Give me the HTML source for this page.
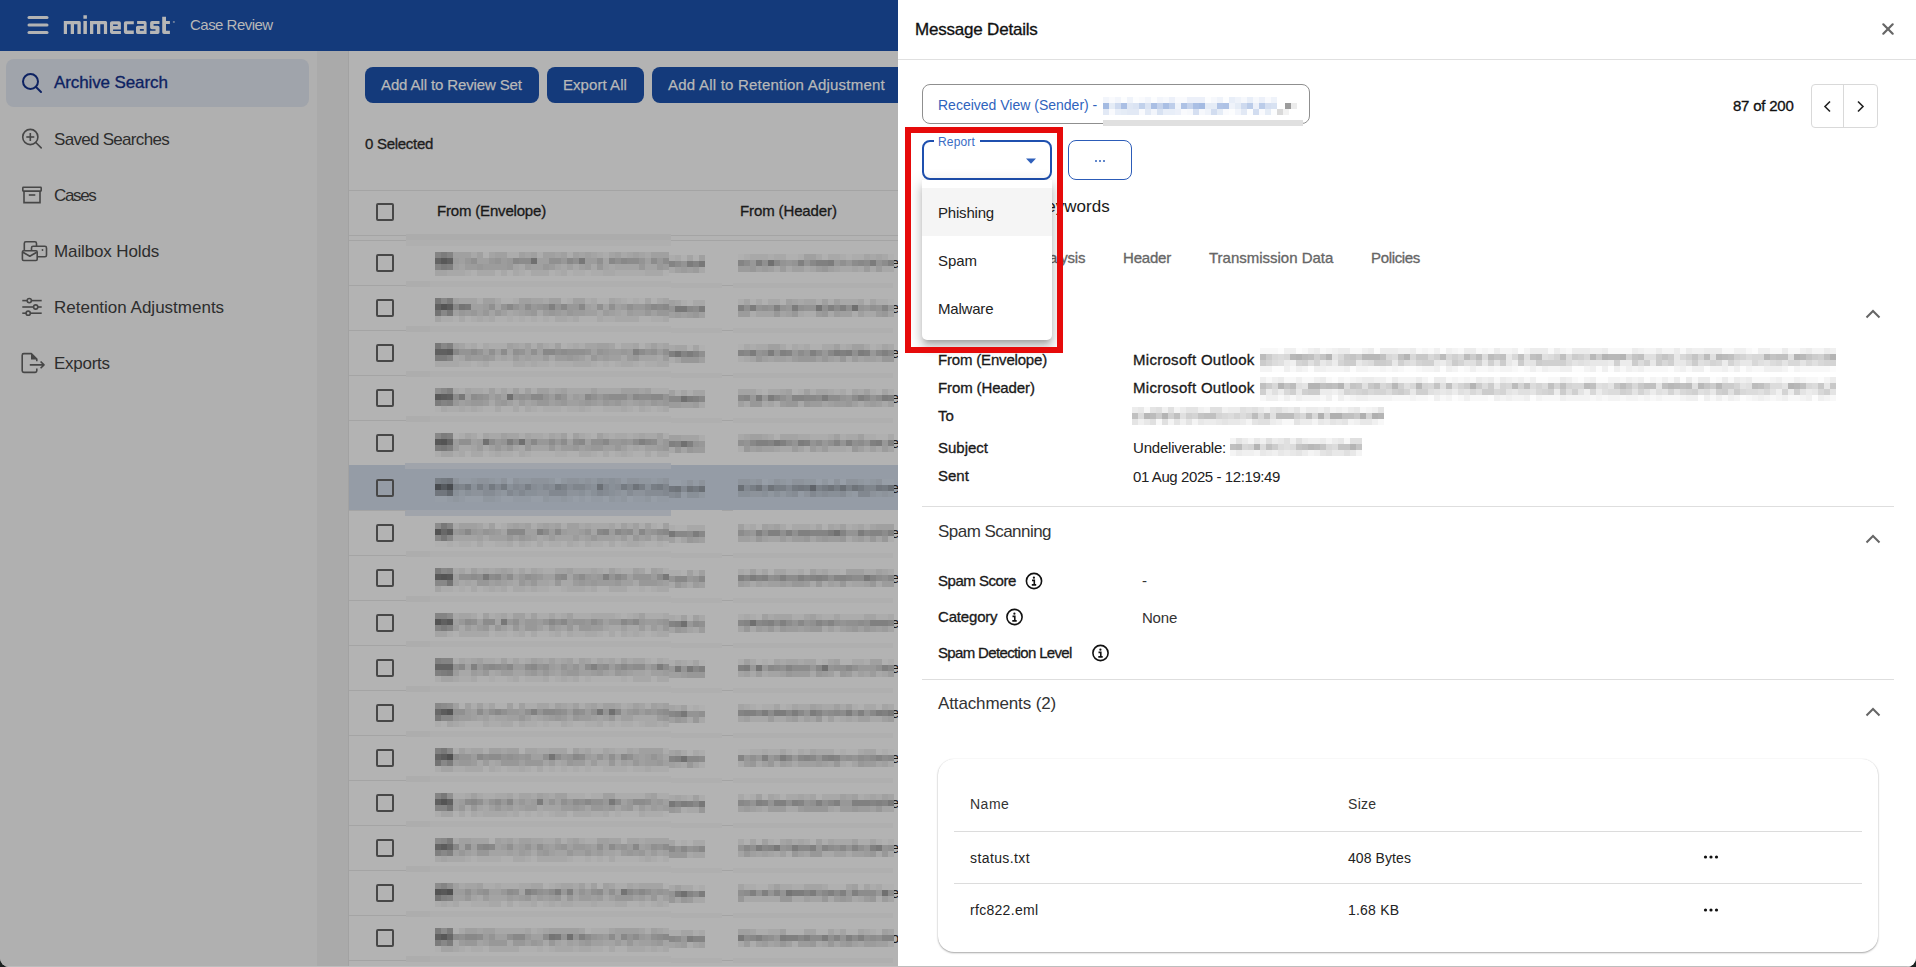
<!DOCTYPE html>
<html><head><meta charset="utf-8">
<style>
*{box-sizing:border-box;margin:0;padding:0}
html,body{width:1916px;height:967px;overflow:hidden;background:#1b2221}
body{position:relative;font-family:"Liberation Sans",sans-serif}
#app{position:absolute;left:0;top:0;width:1916px;height:967px;overflow:hidden;border-radius:0 0 9px 9px;background:#b3b3b3}
.a{position:absolute}
.t{position:absolute;line-height:1;white-space:nowrap}
.b{font-weight:400;-webkit-text-stroke:0.32px currentColor}
svg{position:absolute;overflow:visible}
</style></head>
<body><div id="app">
<!-- ============ LEFT (dimmed) ============ -->
<div class="a" style="left:0;top:0;width:898px;height:51px;background:#143a7b"></div>
<svg style="left:0;top:0" width="60" height="51"><g stroke="#b3b3b3" stroke-width="3" stroke-linecap="round"><line x1="29" y1="17.5" x2="47" y2="17.5"/><line x1="29" y1="25" x2="47" y2="25"/><line x1="29" y1="32.5" x2="47" y2="32.5"/></g></svg>
<svg style="left:0;top:0" width="1" height="1"><path fill="#b6b6b6" fill-rule="evenodd" d="M63.8 21H79.3Q80.8 21 80.8 22.5V34.1H77.4V24.2H74V34.1H70.7V24.2H67V34.1H63.8ZM83.4 21H86.9V34.1H83.4ZM83.4 15.3H86.9V18.8H83.4ZM90 21H105.6Q107.1 21 107.1 22.5V34.1H103.9V24.2H100.3V34.1H97V24.2H93.3V34.1H90ZM111.8 21.2H119.1Q120.9 21.2 120.9 23V29.4H113.1V31.1H120.9V33.9H111.8Q110 33.9 110 32.1V23Q110 21.2 111.8 21.2ZM113.1 24.4H117.7V25.9H113.1ZM125.7 21.2H133.8V24.2H127.1V30.6H133.8V33.9H125.7Q123.9 33.9 123.9 32.1V23Q123.9 21.2 125.7 21.2ZM137.1 21.1H144.8Q146.6 21.1 146.6 22.9V34H137.8Q136 34 136 32.2V27.5Q136 25.7 137.8 25.7H143.8V24.1H137.1ZM139.9 28.9H143.8V30.8H139.9ZM151.9 21.1H159.5V24.1H153.6V25.7H157.7Q159.5 25.7 159.5 27.5V32.2Q159.5 34 157.7 34H150.1V30.8H155.5V29.2H151.9Q150.1 29.2 150.1 27.4V22.9Q150.1 21.1 151.9 21.1ZM162.2 16.7H166V21.1H169.9V24.1H166V30.8H169.9V34H164Q162.2 34 162.2 32.2Z"/><rect x="172.9" y="21.1" width="1.9" height="1.7" fill="#b6b6b6" opacity="0.6"/></svg>

<div class="t" id="caserev" style="left:190px;top:17.3px;font-size:15px;color:#b8b8b8;letter-spacing:-0.52px">Case Review</div>

<div class="a" style="left:0;top:51px;width:317px;height:916px;background:#b0b0b0"></div>
<div class="a" style="left:317px;top:51px;width:31px;height:916px;background:#aaaaaa"></div>
<div class="a" style="left:348px;top:51px;width:1px;height:916px;background:#a2a2a2"></div>

<div class="a" style="left:6px;top:59px;width:303px;height:48px;border-radius:8px;background:#a0a4ab"></div>
<svg style="left:0;top:0" width="50" height="100"><g fill="none" stroke="#0d2262" stroke-width="2"><circle cx="30.5" cy="81.5" r="7.5"/><line x1="36" y1="87" x2="41" y2="92" stroke-linecap="round"/></g></svg>
<div class="t b" style="left:54px;top:73.91px;font-size:17px;color:#0d2262;letter-spacing:-0.11px;">Archive Search</div>
<svg style="left:0;top:0" width="50" height="160"><g fill="none" stroke="#474747" stroke-width="1.6"><circle cx="30.3" cy="137" r="7.6"/><line x1="35.8" y1="142.5" x2="41.2" y2="147.9" stroke-linecap="round"/><line x1="30.3" y1="133" x2="30.3" y2="141"/><line x1="26.3" y1="137" x2="34.3" y2="137"/></g></svg>
<div class="t" style="left:54px;top:130.61px;font-size:17px;color:#2d2d2d;letter-spacing:-0.7px;">Saved Searches</div>
<svg style="left:0;top:0" width="50" height="210"><g fill="none" stroke="#474747" stroke-width="1.6"><rect x="22.8" y="187.3" width="18.4" height="3.8" rx="0.6"/><path d="M24 191.5 V202.6 H40 V191.5"/><line x1="28.8" y1="195" x2="35.3" y2="195"/></g></svg>
<div class="t" style="left:54px;top:186.61px;font-size:17px;color:#2d2d2d;letter-spacing:-1.34px;">Cases</div>
<svg style="left:0;top:0" width="1" height="1"><g fill="none" stroke="#474747" stroke-width="1.6" stroke-linejoin="round"><path d="M24.3 250.8 V243.4 Q24.3 241.8 25.9 241.8 H34.9 Q36.5 241.8 36.5 243.4 V246.3"/><path d="M31.5 250.8 V247.9 Q31.5 246.3 33.1 246.3 H44.9 Q46.5 246.3 46.5 247.9 V255.2 Q46.5 256.8 44.9 256.8 H37.2"/><rect x="22.4" y="250.8" width="14.8" height="9.7" rx="1.2"/><path d="M22.9 252.2 L29.8 256.3 L36.7 252.2"/></g><circle cx="42.5" cy="250" r="0.9" fill="#474747"/></svg>
<div class="t" style="left:54px;top:242.61px;font-size:17px;color:#2d2d2d;letter-spacing:-0.12px;">Mailbox Holds</div>
<svg style="left:0;top:0" width="1" height="1"><g fill="none" stroke="#474747" stroke-width="1.6"><line x1="22.3" y1="300.6" x2="41.7" y2="300.6"/><line x1="22.3" y1="307" x2="41.7" y2="307"/><line x1="22.3" y1="313.2" x2="41.7" y2="313.2"/><circle cx="29.3" cy="300.6" r="2.1" fill="#b0b0b0"/><circle cx="35.7" cy="307" r="2.1" fill="#b0b0b0"/><circle cx="28.2" cy="313.2" r="2.1" fill="#b0b0b0"/></g></svg>
<div class="t" style="left:54px;top:298.61px;font-size:17px;color:#2d2d2d;">Retention Adjustments</div>
<svg style="left:0;top:0" width="1" height="1"><g fill="none" stroke="#474747" stroke-width="1.6" stroke-linejoin="round"><path d="M36.8 361.3 V359.1 L31.3 353.6 H23.8 Q22.2 353.6 22.2 355.2 V370.8 Q22.2 372.4 23.8 372.4 H35.2 Q36.8 372.4 36.8 370.8 V368.5"/><path d="M29.8 364.9 H44 M40.6 361.5 L44 364.9 L40.6 368.3"/></g><path d="M31 353.6 V359.4 H36.8 Z" fill="#474747"/></svg>
<div class="t" style="left:54px;top:354.61px;font-size:17px;color:#2d2d2d;letter-spacing:-0.26px;">Exports</div>


<div class="a" style="left:365px;top:67px;width:174px;height:36px;border-radius:8px;background:#143a7b"></div>
<div class="t b" style="left:381px;top:77.00px;font-size:15px;color:#b8b8b8;letter-spacing:-0.12px;-webkit-text-stroke-width:0.25px;">Add All to Review Set</div>
<div class="a" style="left:547px;top:67px;width:97px;height:36px;border-radius:8px;background:#143a7b"></div>
<div class="t b" style="left:563px;top:77.00px;font-size:15px;color:#b8b8b8;letter-spacing:0.06px;-webkit-text-stroke-width:0.25px;">Export All</div>
<div class="a" style="left:652px;top:67px;width:268px;height:36px;border-radius:8px;background:#143a7b"></div>
<div class="t b" style="left:668px;top:77.00px;font-size:15px;color:#b8b8b8;letter-spacing:0.22px;-webkit-text-stroke-width:0.25px;">Add All to Retention Adjustment</div>
<div class="t b" style="left:365px;top:135.90px;font-size:15px;color:#1e1e1e;letter-spacing:-0.29px;">0 Selected</div>
<div class="a" style="left:349px;top:190px;width:549px;height:1px;background:#a4a4a4"></div>
<div class="a" style="left:349px;top:235px;width:57px;height:1px;background:#a4a4a4"></div>
<div class="a" style="left:349px;top:240px;width:57px;height:1px;background:#a4a4a4"></div>
<div class="a" style="left:406px;top:234px;width:265px;height:6px;background:#acacac"></div>
<div class="a" style="left:406px;top:240px;width:265px;height:6px;background:#afafaf"></div>
<div class="a" style="left:671px;top:235px;width:227px;height:1px;background:#a4a4a4"></div>
<div class="a" style="left:671px;top:240px;width:227px;height:1px;background:#a4a4a4"></div>
<div class="a" style="left:376px;top:203px;width:18px;height:18px;border:2px solid #474747;border-radius:2px"></div>
<div class="t b" style="left:437px;top:202.90px;font-size:15px;color:#1a1a1a;letter-spacing:-0.18px;">From (Envelope)</div>
<div class="t b" style="left:740px;top:202.90px;font-size:15px;color:#1a1a1a;letter-spacing:-0.12px;">From (Header)</div>
<div class="a" style="left:349px;top:285px;width:57px;height:1px;background:#a4a4a4"></div>
<div class="a" style="left:722px;top:285px;width:11px;height:1px;background:#a4a4a4"></div>
<div class="a" style="left:406px;top:281px;width:265px;height:6px;background:#afafaf"></div>
<div class="a" style="left:406px;top:281px;width:24px;height:6px;background:#adadad"></div>
<div class="a" style="left:671px;top:283px;width:51px;height:5px;background:#afafaf"></div>
<div class="a" style="left:733px;top:283px;width:160px;height:5px;background:#afafaf"></div>
<div class="a" style="left:376px;top:254px;width:18px;height:18px;border:2px solid #474747;border-radius:2px"></div>
<div class="t" style="left:891px;top:255.30px;font-size:15px;color:#1a1a1a;">e</div>
<div class="a" style="left:349px;top:330px;width:57px;height:1px;background:#a4a4a4"></div>
<div class="a" style="left:722px;top:330px;width:11px;height:1px;background:#a4a4a4"></div>
<div class="a" style="left:406px;top:326px;width:265px;height:6px;background:#afafaf"></div>
<div class="a" style="left:406px;top:326px;width:24px;height:6px;background:#adadad"></div>
<div class="a" style="left:671px;top:328px;width:51px;height:5px;background:#afafaf"></div>
<div class="a" style="left:733px;top:328px;width:160px;height:5px;background:#afafaf"></div>
<div class="a" style="left:376px;top:299px;width:18px;height:18px;border:2px solid #474747;border-radius:2px"></div>
<div class="t" style="left:891px;top:300.30px;font-size:15px;color:#1a1a1a;">e</div>
<div class="a" style="left:349px;top:375px;width:57px;height:1px;background:#a4a4a4"></div>
<div class="a" style="left:722px;top:375px;width:11px;height:1px;background:#a4a4a4"></div>
<div class="a" style="left:406px;top:371px;width:265px;height:6px;background:#afafaf"></div>
<div class="a" style="left:406px;top:371px;width:24px;height:6px;background:#adadad"></div>
<div class="a" style="left:671px;top:373px;width:51px;height:5px;background:#afafaf"></div>
<div class="a" style="left:733px;top:373px;width:160px;height:5px;background:#afafaf"></div>
<div class="a" style="left:376px;top:344px;width:18px;height:18px;border:2px solid #474747;border-radius:2px"></div>
<div class="t" style="left:891px;top:345.30px;font-size:15px;color:#1a1a1a;">e</div>
<div class="a" style="left:349px;top:420px;width:57px;height:1px;background:#a4a4a4"></div>
<div class="a" style="left:722px;top:420px;width:11px;height:1px;background:#a4a4a4"></div>
<div class="a" style="left:406px;top:416px;width:265px;height:6px;background:#afafaf"></div>
<div class="a" style="left:406px;top:416px;width:24px;height:6px;background:#adadad"></div>
<div class="a" style="left:671px;top:418px;width:51px;height:5px;background:#afafaf"></div>
<div class="a" style="left:733px;top:418px;width:160px;height:5px;background:#afafaf"></div>
<div class="a" style="left:376px;top:389px;width:18px;height:18px;border:2px solid #474747;border-radius:2px"></div>
<div class="t" style="left:891px;top:390.30px;font-size:15px;color:#1a1a1a;">e</div>
<div class="a" style="left:349px;top:465px;width:57px;height:1px;background:#a4a4a4"></div>
<div class="a" style="left:722px;top:465px;width:11px;height:1px;background:#a4a4a4"></div>
<div class="a" style="left:376px;top:434px;width:18px;height:18px;border:2px solid #474747;border-radius:2px"></div>
<div class="t" style="left:891px;top:435.30px;font-size:15px;color:#1a1a1a;">e</div>
<div class="a" style="left:349px;top:465px;width:549px;height:45px;background:#959ca6"></div>
<div class="a" style="left:405px;top:463px;width:266px;height:6px;background:#a0a4ab"></div>
<div class="a" style="left:405px;top:510px;width:266px;height:6px;background:#a0a4ab"></div>
<div class="a" style="left:349px;top:510px;width:57px;height:1px;background:#a4a4a4"></div>
<div class="a" style="left:722px;top:510px;width:11px;height:1px;background:#a4a4a4"></div>
<div class="a" style="left:376px;top:479px;width:18px;height:18px;border:2px solid #474747;border-radius:2px"></div>
<div class="t" style="left:891px;top:480.30px;font-size:15px;color:#1a1a1a;">e</div>
<div class="a" style="left:349px;top:555px;width:57px;height:1px;background:#a4a4a4"></div>
<div class="a" style="left:722px;top:555px;width:11px;height:1px;background:#a4a4a4"></div>
<div class="a" style="left:406px;top:551px;width:265px;height:6px;background:#afafaf"></div>
<div class="a" style="left:406px;top:551px;width:24px;height:6px;background:#adadad"></div>
<div class="a" style="left:671px;top:553px;width:51px;height:5px;background:#afafaf"></div>
<div class="a" style="left:733px;top:553px;width:160px;height:5px;background:#afafaf"></div>
<div class="a" style="left:376px;top:524px;width:18px;height:18px;border:2px solid #474747;border-radius:2px"></div>
<div class="t" style="left:891px;top:525.30px;font-size:15px;color:#1a1a1a;">e</div>
<div class="a" style="left:349px;top:600px;width:57px;height:1px;background:#a4a4a4"></div>
<div class="a" style="left:722px;top:600px;width:11px;height:1px;background:#a4a4a4"></div>
<div class="a" style="left:406px;top:596px;width:265px;height:6px;background:#afafaf"></div>
<div class="a" style="left:406px;top:596px;width:24px;height:6px;background:#adadad"></div>
<div class="a" style="left:671px;top:598px;width:51px;height:5px;background:#afafaf"></div>
<div class="a" style="left:733px;top:598px;width:160px;height:5px;background:#afafaf"></div>
<div class="a" style="left:376px;top:569px;width:18px;height:18px;border:2px solid #474747;border-radius:2px"></div>
<div class="t" style="left:891px;top:570.30px;font-size:15px;color:#1a1a1a;">e</div>
<div class="a" style="left:349px;top:645px;width:57px;height:1px;background:#a4a4a4"></div>
<div class="a" style="left:722px;top:645px;width:11px;height:1px;background:#a4a4a4"></div>
<div class="a" style="left:406px;top:641px;width:265px;height:6px;background:#afafaf"></div>
<div class="a" style="left:406px;top:641px;width:24px;height:6px;background:#adadad"></div>
<div class="a" style="left:671px;top:643px;width:51px;height:5px;background:#afafaf"></div>
<div class="a" style="left:733px;top:643px;width:160px;height:5px;background:#afafaf"></div>
<div class="a" style="left:376px;top:614px;width:18px;height:18px;border:2px solid #474747;border-radius:2px"></div>
<div class="t" style="left:891px;top:615.30px;font-size:15px;color:#1a1a1a;">e</div>
<div class="a" style="left:349px;top:690px;width:57px;height:1px;background:#a4a4a4"></div>
<div class="a" style="left:722px;top:690px;width:11px;height:1px;background:#a4a4a4"></div>
<div class="a" style="left:406px;top:686px;width:265px;height:6px;background:#afafaf"></div>
<div class="a" style="left:406px;top:686px;width:24px;height:6px;background:#adadad"></div>
<div class="a" style="left:671px;top:688px;width:51px;height:5px;background:#afafaf"></div>
<div class="a" style="left:733px;top:688px;width:160px;height:5px;background:#afafaf"></div>
<div class="a" style="left:376px;top:659px;width:18px;height:18px;border:2px solid #474747;border-radius:2px"></div>
<div class="t" style="left:891px;top:660.30px;font-size:15px;color:#1a1a1a;">e</div>
<div class="a" style="left:349px;top:735px;width:57px;height:1px;background:#a4a4a4"></div>
<div class="a" style="left:722px;top:735px;width:11px;height:1px;background:#a4a4a4"></div>
<div class="a" style="left:406px;top:731px;width:265px;height:6px;background:#afafaf"></div>
<div class="a" style="left:406px;top:731px;width:24px;height:6px;background:#adadad"></div>
<div class="a" style="left:671px;top:733px;width:51px;height:5px;background:#afafaf"></div>
<div class="a" style="left:733px;top:733px;width:160px;height:5px;background:#afafaf"></div>
<div class="a" style="left:376px;top:704px;width:18px;height:18px;border:2px solid #474747;border-radius:2px"></div>
<div class="t" style="left:891px;top:705.30px;font-size:15px;color:#1a1a1a;">e</div>
<div class="a" style="left:349px;top:780px;width:57px;height:1px;background:#a4a4a4"></div>
<div class="a" style="left:722px;top:780px;width:11px;height:1px;background:#a4a4a4"></div>
<div class="a" style="left:406px;top:776px;width:265px;height:6px;background:#afafaf"></div>
<div class="a" style="left:406px;top:776px;width:24px;height:6px;background:#adadad"></div>
<div class="a" style="left:671px;top:778px;width:51px;height:5px;background:#afafaf"></div>
<div class="a" style="left:733px;top:778px;width:160px;height:5px;background:#afafaf"></div>
<div class="a" style="left:376px;top:749px;width:18px;height:18px;border:2px solid #474747;border-radius:2px"></div>
<div class="t" style="left:891px;top:750.30px;font-size:15px;color:#1a1a1a;">e</div>
<div class="a" style="left:349px;top:825px;width:57px;height:1px;background:#a4a4a4"></div>
<div class="a" style="left:722px;top:825px;width:11px;height:1px;background:#a4a4a4"></div>
<div class="a" style="left:406px;top:821px;width:265px;height:6px;background:#afafaf"></div>
<div class="a" style="left:406px;top:821px;width:24px;height:6px;background:#adadad"></div>
<div class="a" style="left:671px;top:823px;width:51px;height:5px;background:#afafaf"></div>
<div class="a" style="left:733px;top:823px;width:160px;height:5px;background:#afafaf"></div>
<div class="a" style="left:376px;top:794px;width:18px;height:18px;border:2px solid #474747;border-radius:2px"></div>
<div class="t" style="left:891px;top:795.30px;font-size:15px;color:#1a1a1a;">e</div>
<div class="a" style="left:349px;top:870px;width:57px;height:1px;background:#a4a4a4"></div>
<div class="a" style="left:722px;top:870px;width:11px;height:1px;background:#a4a4a4"></div>
<div class="a" style="left:406px;top:866px;width:265px;height:6px;background:#afafaf"></div>
<div class="a" style="left:406px;top:866px;width:24px;height:6px;background:#adadad"></div>
<div class="a" style="left:671px;top:868px;width:51px;height:5px;background:#afafaf"></div>
<div class="a" style="left:733px;top:868px;width:160px;height:5px;background:#afafaf"></div>
<div class="a" style="left:376px;top:839px;width:18px;height:18px;border:2px solid #474747;border-radius:2px"></div>
<div class="t" style="left:891px;top:840.30px;font-size:15px;color:#1a1a1a;">e</div>
<div class="a" style="left:349px;top:915px;width:57px;height:1px;background:#a4a4a4"></div>
<div class="a" style="left:722px;top:915px;width:11px;height:1px;background:#a4a4a4"></div>
<div class="a" style="left:406px;top:911px;width:265px;height:6px;background:#afafaf"></div>
<div class="a" style="left:406px;top:911px;width:24px;height:6px;background:#adadad"></div>
<div class="a" style="left:671px;top:913px;width:51px;height:5px;background:#afafaf"></div>
<div class="a" style="left:733px;top:913px;width:160px;height:5px;background:#afafaf"></div>
<div class="a" style="left:376px;top:884px;width:18px;height:18px;border:2px solid #474747;border-radius:2px"></div>
<div class="t" style="left:891px;top:885.30px;font-size:15px;color:#1a1a1a;">e</div>
<div class="a" style="left:349px;top:960px;width:57px;height:1px;background:#a4a4a4"></div>
<div class="a" style="left:722px;top:960px;width:11px;height:1px;background:#a4a4a4"></div>
<div class="a" style="left:406px;top:956px;width:265px;height:6px;background:#afafaf"></div>
<div class="a" style="left:406px;top:956px;width:24px;height:6px;background:#adadad"></div>
<div class="a" style="left:671px;top:958px;width:51px;height:5px;background:#afafaf"></div>
<div class="a" style="left:733px;top:958px;width:160px;height:5px;background:#afafaf"></div>
<div class="a" style="left:376px;top:929px;width:18px;height:18px;border:2px solid #474747;border-radius:2px"></div>
<div class="t" style="left:891px;top:930.30px;font-size:15px;color:#1a1a1a;">o</div>
<svg style="left:435px;top:252px" width="234" height="24" viewBox="0 0 39 4" preserveAspectRatio="none" shape-rendering="crispEdges"><path fill="#585858" d="M1 1h1v1h-1z"/><path fill="#606060" d="M2 1h1v1h-1z"/><path fill="#646464" d="M0 1h1v1h-1z"/><path fill="#707070" d="M16 1h1v1h-1z"/><path fill="#787878" d="M24 1h1v1h-1z"/><path fill="#7c7c7c" d="M1 0h1v1h-1zM1 2h1v1h-1z"/><path fill="#808080" d="M2 2h1v1h-1z"/><path fill="#848484" d="M0 0h1v1h-1zM2 0h1v1h-1zM0 2h1v1h-1z"/><path fill="#888888" d="M13 1h1v1h-1zM22 1h1v1h-1zM29 1h1v1h-1zM31 1h1v1h-1z"/><path fill="#8c8c8c" d="M14 1h2v1h-2zM32 1h2v1h-2zM36 1h1v1h-1zM38 1h1v1h-1z"/><path fill="#909090" d="M6 1h1v1h-1zM19 1h2v1h-2zM23 1h1v1h-1zM27 1h1v1h-1zM30 1h1v1h-1z"/><path fill="#949494" d="M10 1h1v1h-1zM34 1h1v1h-1z"/><path fill="#989898" d="M5 1h1v1h-1zM9 1h1v1h-1zM12 1h1v1h-1zM21 1h1v1h-1zM37 1h1v1h-1zM7 2h1v1h-1zM12 2h1v1h-1zM18 2h1v1h-1zM27 2h1v1h-1zM34 2h1v1h-1zM37 2h1v1h-1z"/><path fill="#9c9c9c" d="M3 1h1v1h-1zM11 1h1v1h-1zM25 1h2v1h-2zM5 2h2v1h-2zM8 2h4v1h-4zM15 2h1v1h-1zM19 2h1v1h-1zM25 2h1v1h-1zM38 2h1v1h-1z"/><path fill="#a0a0a0" d="M3 0h3v1h-3zM7 0h1v1h-1zM10 0h2v1h-2zM14 0h1v1h-1zM16 0h1v1h-1zM18 0h2v1h-2zM21 0h1v1h-1zM23 0h1v1h-1zM25 0h1v1h-1zM30 0h1v1h-1zM33 0h1v1h-1zM36 0h3v1h-3zM4 1h1v1h-1zM7 1h2v1h-2zM17 1h2v1h-2zM35 1h1v1h-1zM3 2h1v1h-1zM16 2h2v1h-2zM22 2h1v1h-1zM24 2h1v1h-1z"/><path fill="#a4a4a4" d="M9 0h1v1h-1zM15 0h1v1h-1zM20 0h1v1h-1zM24 0h1v1h-1zM26 0h1v1h-1zM29 0h1v1h-1zM32 0h1v1h-1zM34 0h1v1h-1zM28 1h1v1h-1zM4 2h1v1h-1zM13 2h1v1h-1zM20 2h1v1h-1zM28 2h1v1h-1zM30 2h4v1h-4zM35 2h2v1h-2zM0 3h2v1h-2z"/><path fill="#a8a8a8" d="M6 0h1v1h-1zM27 0h1v1h-1zM31 0h1v1h-1zM35 0h1v1h-1zM14 2h1v1h-1zM21 2h1v1h-1zM23 2h1v1h-1zM26 2h1v1h-1zM29 2h1v1h-1zM2 3h3v1h-3zM7 3h3v1h-3zM11 3h1v1h-1zM13 3h1v1h-1zM16 3h3v1h-3zM21 3h1v1h-1zM28 3h2v1h-2zM35 3h3v1h-3z"/><path fill="#acacac" d="M12 0h2v1h-2zM17 0h1v1h-1zM22 0h1v1h-1zM28 0h1v1h-1zM5 3h1v1h-1zM14 3h1v1h-1zM20 3h1v1h-1zM23 3h2v1h-2zM26 3h2v1h-2zM30 3h5v1h-5z"/><path fill="#b0b0b0" d="M8 0h1v1h-1zM6 3h1v1h-1zM10 3h1v1h-1zM12 3h1v1h-1zM15 3h1v1h-1zM19 3h1v1h-1zM22 3h1v1h-1zM25 3h1v1h-1zM38 3h1v1h-1z"/></svg>
<svg style="left:669px;top:255px" width="36" height="18" viewBox="0 0 6 3" preserveAspectRatio="none" shape-rendering="crispEdges"><path fill="#787878" d="M5 1h1v1h-1z"/><path fill="#7c7c7c" d="M3 1h1v1h-1z"/><path fill="#848484" d="M0 1h1v1h-1zM4 1h1v1h-1z"/><path fill="#8c8c8c" d="M1 1h1v1h-1z"/><path fill="#949494" d="M2 1h1v1h-1z"/><path fill="#9c9c9c" d="M2 2h1v1h-1zM4 2h1v1h-1z"/><path fill="#a0a0a0" d="M5 0h1v1h-1zM1 2h1v1h-1zM3 2h1v1h-1z"/><path fill="#a4a4a4" d="M3 0h1v1h-1z"/><path fill="#a8a8a8" d="M1 0h1v1h-1zM0 2h1v1h-1zM5 2h1v1h-1z"/><path fill="#acacac" d="M0 0h1v1h-1z"/><path fill="#b0b0b0" d="M2 0h1v1h-1zM4 0h1v1h-1z"/></svg>
<svg style="left:738px;top:254px" width="156" height="18" viewBox="0 0 26 3" preserveAspectRatio="none" shape-rendering="crispEdges"><path fill="#707070" d="M5 1h1v1h-1z"/><path fill="#7c7c7c" d="M3 1h1v1h-1zM15 1h1v1h-1zM22 1h1v1h-1z"/><path fill="#808080" d="M10 1h1v1h-1zM13 1h2v1h-2zM25 1h1v1h-1z"/><path fill="#848484" d="M0 1h1v1h-1z"/><path fill="#888888" d="M6 1h1v1h-1zM12 1h1v1h-1zM20 1h1v1h-1z"/><path fill="#8c8c8c" d="M1 1h1v1h-1zM19 1h1v1h-1zM21 1h1v1h-1zM24 1h1v1h-1z"/><path fill="#909090" d="M4 1h1v1h-1zM17 1h1v1h-1z"/><path fill="#949494" d="M7 1h1v1h-1zM9 1h1v1h-1zM11 1h1v1h-1zM23 1h1v1h-1z"/><path fill="#989898" d="M2 1h1v1h-1zM8 1h1v1h-1zM16 1h1v1h-1zM18 1h1v1h-1zM2 2h1v1h-1zM14 2h1v1h-1z"/><path fill="#9c9c9c" d="M0 2h2v1h-2zM4 2h1v1h-1zM7 2h1v1h-1zM13 2h1v1h-1zM21 2h1v1h-1zM23 2h1v1h-1z"/><path fill="#a0a0a0" d="M11 0h2v1h-2zM3 2h1v1h-1zM5 2h1v1h-1zM9 2h2v1h-2zM15 2h1v1h-1z"/><path fill="#a4a4a4" d="M21 0h1v1h-1zM23 0h1v1h-1zM12 2h1v1h-1zM16 2h1v1h-1zM19 2h1v1h-1z"/><path fill="#a8a8a8" d="M2 0h3v1h-3zM6 0h2v1h-2zM13 0h1v1h-1zM15 0h2v1h-2zM22 0h1v1h-1zM24 0h1v1h-1zM6 2h1v1h-1zM8 2h1v1h-1zM11 2h1v1h-1zM17 2h2v1h-2zM20 2h1v1h-1zM22 2h1v1h-1zM24 2h2v1h-2z"/><path fill="#acacac" d="M1 0h1v1h-1zM5 0h1v1h-1zM10 0h1v1h-1zM17 0h1v1h-1zM19 0h2v1h-2z"/><path fill="#b0b0b0" d="M0 0h1v1h-1zM8 0h2v1h-2zM14 0h1v1h-1zM18 0h1v1h-1zM25 0h1v1h-1z"/></svg>
<svg style="left:435px;top:298px" width="234" height="24" viewBox="0 0 39 4" preserveAspectRatio="none" shape-rendering="crispEdges"><path fill="#545454" d="M1 1h1v1h-1z"/><path fill="#5c5c5c" d="M2 1h1v1h-1z"/><path fill="#606060" d="M0 1h1v1h-1z"/><path fill="#747474" d="M4 1h1v1h-1zM0 2h1v1h-1z"/><path fill="#787878" d="M0 0h1v1h-1zM5 1h1v1h-1zM2 2h1v1h-1z"/><path fill="#7c7c7c" d="M2 0h1v1h-1z"/><path fill="#808080" d="M19 1h1v1h-1z"/><path fill="#888888" d="M1 0h1v1h-1zM3 1h1v1h-1zM12 1h1v1h-1zM21 1h1v1h-1zM24 1h1v1h-1zM36 1h1v1h-1zM38 1h1v1h-1zM1 2h1v1h-1z"/><path fill="#8c8c8c" d="M15 1h1v1h-1zM37 1h1v1h-1z"/><path fill="#909090" d="M9 1h1v1h-1zM18 1h1v1h-1zM27 1h1v1h-1zM29 1h1v1h-1zM32 1h1v1h-1zM35 1h1v1h-1z"/><path fill="#949494" d="M11 1h1v1h-1zM13 1h1v1h-1zM17 1h1v1h-1zM20 1h1v1h-1z"/><path fill="#989898" d="M16 1h1v1h-1zM22 1h2v1h-2zM33 1h2v1h-2zM4 2h1v1h-1zM6 2h1v1h-1zM8 2h1v1h-1zM10 2h1v1h-1zM16 2h1v1h-1zM19 2h1v1h-1zM22 2h1v1h-1zM35 2h1v1h-1zM37 2h2v1h-2z"/><path fill="#9c9c9c" d="M8 1h1v1h-1zM14 1h1v1h-1zM31 1h1v1h-1zM5 2h1v1h-1zM15 2h1v1h-1zM18 2h1v1h-1zM20 2h1v1h-1zM23 2h2v1h-2zM28 2h1v1h-1zM32 2h1v1h-1z"/><path fill="#a0a0a0" d="M3 0h1v1h-1zM8 0h2v1h-2zM14 0h2v1h-2zM19 0h2v1h-2zM23 0h2v1h-2zM6 1h2v1h-2zM25 1h1v1h-1zM30 1h1v1h-1zM3 2h1v1h-1zM7 2h1v1h-1zM11 2h1v1h-1zM14 2h1v1h-1zM21 2h1v1h-1zM25 2h2v1h-2zM29 2h1v1h-1zM33 2h2v1h-2zM36 2h1v1h-1z"/><path fill="#a4a4a4" d="M4 0h3v1h-3zM16 0h2v1h-2zM29 0h1v1h-1zM35 0h1v1h-1zM38 0h1v1h-1zM10 1h1v1h-1zM26 1h1v1h-1zM28 1h1v1h-1zM9 2h1v1h-1zM13 2h1v1h-1zM30 2h1v1h-1zM0 3h1v1h-1z"/><path fill="#a8a8a8" d="M10 0h1v1h-1zM18 0h1v1h-1zM26 0h1v1h-1zM30 0h1v1h-1zM37 0h1v1h-1zM12 2h1v1h-1zM17 2h1v1h-1zM27 2h1v1h-1zM31 2h1v1h-1zM4 3h1v1h-1zM7 3h1v1h-1zM9 3h1v1h-1zM20 3h2v1h-2zM23 3h1v1h-1zM27 3h1v1h-1zM30 3h4v1h-4zM38 3h1v1h-1z"/><path fill="#acacac" d="M7 0h1v1h-1zM13 0h1v1h-1zM22 0h1v1h-1zM25 0h1v1h-1zM31 0h1v1h-1zM33 0h1v1h-1zM1 3h2v1h-2zM6 3h1v1h-1zM8 3h1v1h-1zM12 3h1v1h-1zM14 3h1v1h-1zM16 3h1v1h-1zM18 3h1v1h-1zM22 3h1v1h-1zM28 3h2v1h-2zM36 3h2v1h-2z"/><path fill="#b0b0b0" d="M11 0h2v1h-2zM21 0h1v1h-1zM27 0h2v1h-2zM32 0h1v1h-1zM34 0h1v1h-1zM36 0h1v1h-1zM3 3h1v1h-1zM5 3h1v1h-1zM10 3h2v1h-2zM13 3h1v1h-1zM15 3h1v1h-1zM17 3h1v1h-1zM19 3h1v1h-1zM24 3h3v1h-3zM34 3h2v1h-2z"/></svg>
<svg style="left:669px;top:300px" width="36" height="18" viewBox="0 0 6 3" preserveAspectRatio="none" shape-rendering="crispEdges"><path fill="#787878" d="M1 1h2v1h-2z"/><path fill="#7c7c7c" d="M5 1h1v1h-1z"/><path fill="#888888" d="M3 1h1v1h-1z"/><path fill="#8c8c8c" d="M4 1h1v1h-1z"/><path fill="#949494" d="M0 1h1v1h-1z"/><path fill="#989898" d="M4 2h1v1h-1z"/><path fill="#9c9c9c" d="M1 2h1v1h-1zM3 2h1v1h-1z"/><path fill="#a0a0a0" d="M0 0h1v1h-1zM0 2h1v1h-1zM2 2h1v1h-1zM5 2h1v1h-1z"/><path fill="#a4a4a4" d="M1 0h1v1h-1z"/><path fill="#a8a8a8" d="M4 0h2v1h-2z"/><path fill="#acacac" d="M2 0h1v1h-1z"/><path fill="#b0b0b0" d="M3 0h1v1h-1z"/></svg>
<svg style="left:738px;top:299px" width="156" height="18" viewBox="0 0 26 3" preserveAspectRatio="none" shape-rendering="crispEdges"><path fill="#707070" d="M19 1h1v1h-1z"/><path fill="#747474" d="M13 1h1v1h-1z"/><path fill="#7c7c7c" d="M2 1h1v1h-1zM9 1h1v1h-1z"/><path fill="#808080" d="M0 1h1v1h-1zM6 1h1v1h-1zM15 1h1v1h-1zM17 1h1v1h-1z"/><path fill="#848484" d="M24 1h1v1h-1z"/><path fill="#8c8c8c" d="M16 1h1v1h-1z"/><path fill="#909090" d="M1 1h1v1h-1zM4 1h1v1h-1zM10 1h1v1h-1zM14 1h1v1h-1zM18 1h1v1h-1zM22 1h1v1h-1z"/><path fill="#949494" d="M3 1h1v1h-1zM5 1h1v1h-1zM7 1h1v1h-1zM11 1h2v1h-2zM20 1h1v1h-1zM23 1h1v1h-1z"/><path fill="#989898" d="M8 1h1v1h-1zM21 1h1v1h-1zM25 1h1v1h-1zM6 2h1v1h-1zM9 2h1v1h-1zM14 2h1v1h-1zM24 2h1v1h-1z"/><path fill="#9c9c9c" d="M0 2h2v1h-2zM13 2h1v1h-1zM16 2h1v1h-1zM23 2h1v1h-1z"/><path fill="#a0a0a0" d="M8 0h1v1h-1zM14 0h1v1h-1zM16 0h1v1h-1zM8 2h1v1h-1zM17 2h2v1h-2zM20 2h1v1h-1z"/><path fill="#a4a4a4" d="M1 0h1v1h-1zM9 0h1v1h-1zM11 0h2v1h-2zM20 0h1v1h-1zM22 0h1v1h-1zM3 2h3v1h-3zM7 2h1v1h-1zM25 2h1v1h-1z"/><path fill="#a8a8a8" d="M3 0h1v1h-1zM5 0h2v1h-2zM10 0h1v1h-1zM17 0h3v1h-3zM10 2h1v1h-1zM15 2h1v1h-1zM21 2h2v1h-2z"/><path fill="#acacac" d="M0 0h1v1h-1zM13 0h1v1h-1zM15 0h1v1h-1zM23 0h2v1h-2zM2 2h1v1h-1zM11 2h2v1h-2zM19 2h1v1h-1z"/><path fill="#b0b0b0" d="M2 0h1v1h-1zM4 0h1v1h-1zM7 0h1v1h-1zM21 0h1v1h-1zM25 0h1v1h-1z"/></svg>
<svg style="left:435px;top:343px" width="234" height="24" viewBox="0 0 39 4" preserveAspectRatio="none" shape-rendering="crispEdges"><path fill="#5c5c5c" d="M2 1h1v1h-1z"/><path fill="#606060" d="M0 1h2v1h-2z"/><path fill="#787878" d="M0 0h1v1h-1z"/><path fill="#7c7c7c" d="M0 2h2v1h-2z"/><path fill="#808080" d="M2 0h1v1h-1zM33 1h1v1h-1z"/><path fill="#848484" d="M2 2h1v1h-1z"/><path fill="#888888" d="M1 0h1v1h-1zM3 1h1v1h-1zM18 1h2v1h-2z"/><path fill="#8c8c8c" d="M6 1h1v1h-1zM11 1h1v1h-1zM21 1h1v1h-1zM34 1h1v1h-1z"/><path fill="#909090" d="M9 1h1v1h-1zM13 1h1v1h-1zM16 1h1v1h-1zM20 1h1v1h-1zM22 1h3v1h-3zM36 1h1v1h-1zM38 1h1v1h-1z"/><path fill="#949494" d="M4 1h2v1h-2zM7 1h1v1h-1zM14 1h1v1h-1zM25 1h1v1h-1zM27 1h1v1h-1zM35 1h1v1h-1z"/><path fill="#989898" d="M28 1h1v1h-1zM31 1h1v1h-1zM5 2h1v1h-1zM8 2h1v1h-1zM22 2h1v1h-1zM26 2h1v1h-1zM33 2h1v1h-1z"/><path fill="#9c9c9c" d="M29 1h2v1h-2zM32 1h1v1h-1zM37 1h1v1h-1zM6 2h2v1h-2zM9 2h1v1h-1zM13 2h1v1h-1zM18 2h1v1h-1zM20 2h2v1h-2zM23 2h1v1h-1zM28 2h1v1h-1zM32 2h1v1h-1zM38 2h1v1h-1z"/><path fill="#a0a0a0" d="M3 0h1v1h-1zM12 0h1v1h-1zM15 0h1v1h-1zM17 0h1v1h-1zM20 0h1v1h-1zM27 0h2v1h-2zM36 0h1v1h-1zM8 1h1v1h-1zM10 1h1v1h-1zM15 1h1v1h-1zM17 1h1v1h-1zM26 1h1v1h-1zM15 2h1v1h-1zM24 2h1v1h-1zM27 2h1v1h-1zM29 2h2v1h-2z"/><path fill="#a4a4a4" d="M4 0h1v1h-1zM13 0h1v1h-1zM25 0h2v1h-2zM29 0h1v1h-1zM33 0h1v1h-1zM38 0h1v1h-1zM12 1h1v1h-1zM4 2h1v1h-1zM11 2h1v1h-1zM14 2h1v1h-1zM16 2h2v1h-2zM34 2h3v1h-3z"/><path fill="#a8a8a8" d="M6 0h1v1h-1zM8 0h1v1h-1zM14 0h1v1h-1zM18 0h1v1h-1zM23 0h1v1h-1zM31 0h2v1h-2zM35 0h1v1h-1zM37 0h1v1h-1zM3 2h1v1h-1zM10 2h1v1h-1zM12 2h1v1h-1zM19 2h1v1h-1zM25 2h1v1h-1zM31 2h1v1h-1zM37 2h1v1h-1zM0 3h4v1h-4zM8 3h1v1h-1zM13 3h2v1h-2zM16 3h1v1h-1zM23 3h3v1h-3zM31 3h2v1h-2zM37 3h2v1h-2z"/><path fill="#acacac" d="M5 0h1v1h-1zM9 0h3v1h-3zM16 0h1v1h-1zM19 0h1v1h-1zM22 0h1v1h-1zM24 0h1v1h-1zM4 3h2v1h-2zM7 3h1v1h-1zM15 3h1v1h-1zM17 3h2v1h-2zM20 3h3v1h-3zM26 3h1v1h-1zM28 3h1v1h-1zM30 3h1v1h-1zM33 3h1v1h-1zM35 3h2v1h-2z"/><path fill="#b0b0b0" d="M7 0h1v1h-1zM21 0h1v1h-1zM30 0h1v1h-1zM34 0h1v1h-1zM6 3h1v1h-1zM9 3h4v1h-4zM19 3h1v1h-1zM27 3h1v1h-1zM29 3h1v1h-1zM34 3h1v1h-1z"/></svg>
<svg style="left:669px;top:345px" width="36" height="18" viewBox="0 0 6 3" preserveAspectRatio="none" shape-rendering="crispEdges"><path fill="#747474" d="M1 1h1v1h-1z"/><path fill="#7c7c7c" d="M3 1h1v1h-1z"/><path fill="#808080" d="M0 1h1v1h-1z"/><path fill="#848484" d="M2 1h1v1h-1zM4 1h1v1h-1z"/><path fill="#909090" d="M5 1h1v1h-1z"/><path fill="#989898" d="M2 2h3v1h-3z"/><path fill="#a0a0a0" d="M5 2h1v1h-1z"/><path fill="#a4a4a4" d="M1 0h2v1h-2zM4 0h1v1h-1zM1 2h1v1h-1z"/><path fill="#a8a8a8" d="M0 0h1v1h-1z"/><path fill="#acacac" d="M0 2h1v1h-1z"/><path fill="#b0b0b0" d="M3 0h1v1h-1zM5 0h1v1h-1z"/></svg>
<svg style="left:738px;top:344px" width="156" height="18" viewBox="0 0 26 3" preserveAspectRatio="none" shape-rendering="crispEdges"><path fill="#7c7c7c" d="M2 1h1v1h-1zM5 1h1v1h-1zM16 1h1v1h-1zM18 1h1v1h-1zM20 1h1v1h-1z"/><path fill="#808080" d="M7 1h1v1h-1zM12 1h1v1h-1zM17 1h1v1h-1zM21 1h1v1h-1zM24 1h1v1h-1z"/><path fill="#848484" d="M0 1h1v1h-1zM8 1h1v1h-1z"/><path fill="#888888" d="M1 1h1v1h-1zM15 1h1v1h-1zM23 1h1v1h-1zM25 1h1v1h-1z"/><path fill="#8c8c8c" d="M10 1h1v1h-1zM13 1h1v1h-1z"/><path fill="#909090" d="M4 1h1v1h-1zM19 1h1v1h-1z"/><path fill="#949494" d="M3 1h1v1h-1zM6 1h1v1h-1zM11 1h1v1h-1z"/><path fill="#989898" d="M9 1h1v1h-1zM14 1h1v1h-1zM22 1h1v1h-1zM3 2h1v1h-1zM10 2h3v1h-3zM14 2h1v1h-1zM17 2h1v1h-1zM24 2h2v1h-2z"/><path fill="#9c9c9c" d="M9 2h1v1h-1zM19 2h1v1h-1z"/><path fill="#a0a0a0" d="M5 0h2v1h-2zM16 0h1v1h-1zM19 0h2v1h-2zM4 2h1v1h-1zM6 2h2v1h-2zM13 2h1v1h-1zM15 2h1v1h-1zM21 2h2v1h-2z"/><path fill="#a4a4a4" d="M24 0h1v1h-1zM2 2h1v1h-1zM5 2h1v1h-1zM8 2h1v1h-1zM16 2h1v1h-1zM20 2h1v1h-1zM23 2h1v1h-1z"/><path fill="#a8a8a8" d="M1 0h1v1h-1zM3 0h2v1h-2zM7 0h1v1h-1zM9 0h1v1h-1zM11 0h1v1h-1zM14 0h2v1h-2zM18 0h1v1h-1zM21 0h1v1h-1zM25 0h1v1h-1zM1 2h1v1h-1zM18 2h1v1h-1z"/><path fill="#acacac" d="M2 0h1v1h-1zM10 0h1v1h-1zM17 0h1v1h-1zM23 0h1v1h-1zM0 2h1v1h-1z"/><path fill="#b0b0b0" d="M0 0h1v1h-1zM8 0h1v1h-1zM12 0h2v1h-2zM22 0h1v1h-1z"/></svg>
<svg style="left:435px;top:388px" width="234" height="24" viewBox="0 0 39 4" preserveAspectRatio="none" shape-rendering="crispEdges"><path fill="#585858" d="M0 1h1v1h-1z"/><path fill="#5c5c5c" d="M1 1h1v1h-1z"/><path fill="#606060" d="M2 1h1v1h-1z"/><path fill="#707070" d="M12 1h1v1h-1z"/><path fill="#787878" d="M4 1h1v1h-1z"/><path fill="#7c7c7c" d="M0 2h1v1h-1z"/><path fill="#808080" d="M2 0h1v1h-1zM2 2h1v1h-1z"/><path fill="#848484" d="M1 2h1v1h-1z"/><path fill="#888888" d="M1 0h1v1h-1zM16 1h2v1h-2zM25 1h1v1h-1zM33 1h1v1h-1zM36 1h2v1h-2z"/><path fill="#8c8c8c" d="M3 1h1v1h-1zM6 1h1v1h-1zM20 1h1v1h-1zM29 1h3v1h-3zM34 1h2v1h-2z"/><path fill="#909090" d="M0 0h1v1h-1zM7 1h1v1h-1zM14 1h1v1h-1zM26 1h1v1h-1zM28 1h1v1h-1z"/><path fill="#949494" d="M8 1h1v1h-1zM13 1h1v1h-1zM15 1h1v1h-1zM18 1h1v1h-1zM21 1h1v1h-1zM38 1h1v1h-1z"/><path fill="#989898" d="M10 1h1v1h-1zM27 1h1v1h-1zM32 1h1v1h-1zM3 2h1v1h-1zM6 2h2v1h-2zM11 2h1v1h-1zM17 2h2v1h-2zM21 2h1v1h-1zM25 2h1v1h-1zM28 2h1v1h-1zM30 2h1v1h-1zM36 2h1v1h-1zM38 2h1v1h-1z"/><path fill="#9c9c9c" d="M19 1h1v1h-1zM23 1h1v1h-1zM5 2h1v1h-1zM8 2h1v1h-1zM10 2h1v1h-1zM14 2h1v1h-1zM20 2h1v1h-1zM24 2h1v1h-1zM26 2h1v1h-1zM29 2h1v1h-1zM34 2h1v1h-1zM37 2h1v1h-1z"/><path fill="#a0a0a0" d="M9 0h1v1h-1zM13 0h1v1h-1zM15 0h1v1h-1zM17 0h2v1h-2zM21 0h1v1h-1zM26 0h1v1h-1zM31 0h3v1h-3zM35 0h1v1h-1zM5 1h1v1h-1zM9 1h1v1h-1zM11 1h1v1h-1zM24 1h1v1h-1zM4 2h1v1h-1zM12 2h1v1h-1zM16 2h1v1h-1zM19 2h1v1h-1zM22 2h2v1h-2zM27 2h1v1h-1zM31 2h1v1h-1zM33 2h1v1h-1zM35 2h1v1h-1z"/><path fill="#a4a4a4" d="M5 0h1v1h-1zM11 0h1v1h-1zM20 0h1v1h-1zM34 0h1v1h-1zM22 1h1v1h-1zM15 2h1v1h-1zM32 2h1v1h-1z"/><path fill="#a8a8a8" d="M3 0h1v1h-1zM6 0h2v1h-2zM19 0h1v1h-1zM22 0h4v1h-4zM27 0h4v1h-4zM9 2h1v1h-1zM13 2h1v1h-1zM1 3h1v1h-1zM4 3h1v1h-1zM6 3h1v1h-1zM10 3h1v1h-1zM13 3h1v1h-1zM15 3h1v1h-1zM24 3h1v1h-1zM31 3h1v1h-1zM34 3h1v1h-1zM38 3h1v1h-1z"/><path fill="#acacac" d="M4 0h1v1h-1zM8 0h1v1h-1zM10 0h1v1h-1zM12 0h1v1h-1zM14 0h1v1h-1zM16 0h1v1h-1zM36 0h3v1h-3zM2 3h2v1h-2zM5 3h1v1h-1zM7 3h1v1h-1zM16 3h1v1h-1zM18 3h3v1h-3zM22 3h2v1h-2zM25 3h1v1h-1zM28 3h3v1h-3zM32 3h1v1h-1zM35 3h1v1h-1zM37 3h1v1h-1z"/><path fill="#b0b0b0" d="M0 3h1v1h-1zM8 3h2v1h-2zM11 3h2v1h-2zM14 3h1v1h-1zM17 3h1v1h-1zM21 3h1v1h-1zM26 3h2v1h-2zM33 3h1v1h-1zM36 3h1v1h-1z"/></svg>
<svg style="left:669px;top:390px" width="36" height="18" viewBox="0 0 6 3" preserveAspectRatio="none" shape-rendering="crispEdges"><path fill="#707070" d="M2 1h1v1h-1z"/><path fill="#7c7c7c" d="M3 1h1v1h-1z"/><path fill="#808080" d="M4 1h1v1h-1z"/><path fill="#888888" d="M0 1h2v1h-2zM5 1h1v1h-1z"/><path fill="#9c9c9c" d="M0 2h2v1h-2zM4 2h1v1h-1z"/><path fill="#a0a0a0" d="M0 0h1v1h-1zM2 2h2v1h-2z"/><path fill="#a4a4a4" d="M2 0h1v1h-1zM4 0h2v1h-2z"/><path fill="#a8a8a8" d="M5 2h1v1h-1z"/><path fill="#acacac" d="M1 0h1v1h-1zM3 0h1v1h-1z"/></svg>
<svg style="left:738px;top:389px" width="156" height="18" viewBox="0 0 26 3" preserveAspectRatio="none" shape-rendering="crispEdges"><path fill="#7c7c7c" d="M3 1h1v1h-1zM5 1h1v1h-1zM14 1h1v1h-1zM24 1h1v1h-1z"/><path fill="#808080" d="M20 1h1v1h-1zM25 1h1v1h-1z"/><path fill="#848484" d="M1 1h1v1h-1zM9 1h2v1h-2z"/><path fill="#888888" d="M0 1h1v1h-1zM6 1h1v1h-1zM11 1h2v1h-2zM21 1h1v1h-1z"/><path fill="#8c8c8c" d="M13 1h1v1h-1zM15 1h2v1h-2zM19 1h1v1h-1zM23 1h1v1h-1z"/><path fill="#909090" d="M7 1h1v1h-1z"/><path fill="#949494" d="M17 1h1v1h-1zM22 1h1v1h-1z"/><path fill="#989898" d="M2 1h1v1h-1zM4 1h1v1h-1zM8 1h1v1h-1zM18 1h1v1h-1zM2 2h2v1h-2zM8 2h2v1h-2zM11 2h1v1h-1zM18 2h1v1h-1z"/><path fill="#9c9c9c" d="M7 2h1v1h-1zM12 2h2v1h-2zM16 2h2v1h-2zM22 2h1v1h-1z"/><path fill="#a0a0a0" d="M8 0h1v1h-1zM11 0h1v1h-1zM21 0h1v1h-1zM0 2h1v1h-1zM15 2h1v1h-1zM19 2h1v1h-1zM21 2h1v1h-1zM23 2h1v1h-1zM25 2h1v1h-1z"/><path fill="#a4a4a4" d="M0 0h3v1h-3zM7 0h1v1h-1zM13 0h2v1h-2zM19 0h1v1h-1zM24 0h1v1h-1zM5 2h1v1h-1zM14 2h1v1h-1z"/><path fill="#a8a8a8" d="M5 0h2v1h-2zM15 0h1v1h-1zM17 0h1v1h-1zM20 0h1v1h-1zM1 2h1v1h-1zM4 2h1v1h-1zM10 2h1v1h-1zM20 2h1v1h-1zM24 2h1v1h-1z"/><path fill="#acacac" d="M3 0h1v1h-1zM10 0h1v1h-1zM12 0h1v1h-1zM16 0h1v1h-1zM22 0h1v1h-1zM25 0h1v1h-1zM6 2h1v1h-1z"/><path fill="#b0b0b0" d="M4 0h1v1h-1zM9 0h1v1h-1zM18 0h1v1h-1zM23 0h1v1h-1z"/></svg>
<svg style="left:435px;top:433px" width="234" height="24" viewBox="0 0 39 4" preserveAspectRatio="none" shape-rendering="crispEdges"><path fill="#545454" d="M1 1h1v1h-1z"/><path fill="#585858" d="M0 1h1v1h-1z"/><path fill="#646464" d="M2 1h1v1h-1z"/><path fill="#707070" d="M8 1h1v1h-1zM14 1h1v1h-1z"/><path fill="#787878" d="M1 2h1v1h-1z"/><path fill="#7c7c7c" d="M1 0h1v1h-1zM12 1h1v1h-1zM0 2h1v1h-1z"/><path fill="#808080" d="M2 0h1v1h-1zM34 1h1v1h-1zM2 2h1v1h-1z"/><path fill="#888888" d="M0 0h1v1h-1zM16 1h1v1h-1zM24 1h1v1h-1zM28 1h1v1h-1zM35 1h1v1h-1z"/><path fill="#8c8c8c" d="M9 1h1v1h-1zM13 1h1v1h-1zM19 1h1v1h-1zM21 1h1v1h-1zM23 1h1v1h-1zM33 1h1v1h-1zM36 1h1v1h-1z"/><path fill="#909090" d="M4 1h2v1h-2zM26 1h2v1h-2z"/><path fill="#949494" d="M11 1h1v1h-1zM31 1h1v1h-1z"/><path fill="#989898" d="M10 1h1v1h-1zM15 1h1v1h-1zM17 1h2v1h-2zM20 1h1v1h-1zM29 1h2v1h-2zM32 1h1v1h-1zM38 1h1v1h-1zM10 2h1v1h-1zM12 2h1v1h-1zM15 2h1v1h-1zM19 2h1v1h-1zM23 2h1v1h-1zM26 2h2v1h-2zM30 2h1v1h-1zM38 2h1v1h-1z"/><path fill="#9c9c9c" d="M3 1h1v1h-1zM7 1h1v1h-1zM3 2h1v1h-1zM7 2h1v1h-1zM21 2h2v1h-2zM25 2h1v1h-1zM37 2h1v1h-1z"/><path fill="#a0a0a0" d="M11 0h1v1h-1zM21 0h1v1h-1zM23 0h1v1h-1zM27 0h1v1h-1zM37 0h1v1h-1zM6 1h1v1h-1zM22 1h1v1h-1zM25 1h1v1h-1zM37 1h1v1h-1zM9 2h1v1h-1zM11 2h1v1h-1zM24 2h1v1h-1zM28 2h2v1h-2zM31 2h1v1h-1zM35 2h2v1h-2z"/><path fill="#a4a4a4" d="M5 0h1v1h-1zM8 0h1v1h-1zM12 0h2v1h-2zM15 0h1v1h-1zM19 0h1v1h-1zM34 0h1v1h-1zM6 2h1v1h-1zM13 2h1v1h-1zM16 2h3v1h-3zM20 2h1v1h-1zM33 2h1v1h-1zM1 3h2v1h-2z"/><path fill="#a8a8a8" d="M6 0h1v1h-1zM9 0h2v1h-2zM16 0h2v1h-2zM20 0h1v1h-1zM24 0h1v1h-1zM28 0h1v1h-1zM30 0h2v1h-2zM33 0h1v1h-1zM35 0h2v1h-2zM4 2h2v1h-2zM8 2h1v1h-1zM14 2h1v1h-1zM32 2h1v1h-1zM34 2h1v1h-1zM4 3h1v1h-1zM6 3h2v1h-2zM10 3h1v1h-1zM14 3h1v1h-1zM24 3h2v1h-2zM28 3h1v1h-1zM31 3h1v1h-1zM35 3h1v1h-1zM37 3h2v1h-2z"/><path fill="#acacac" d="M4 0h1v1h-1zM14 0h1v1h-1zM18 0h1v1h-1zM25 0h1v1h-1zM29 0h1v1h-1zM32 0h1v1h-1zM38 0h1v1h-1zM0 3h1v1h-1zM3 3h1v1h-1zM9 3h1v1h-1zM11 3h2v1h-2zM15 3h1v1h-1zM20 3h2v1h-2zM26 3h1v1h-1zM30 3h1v1h-1zM32 3h1v1h-1z"/><path fill="#b0b0b0" d="M3 0h1v1h-1zM7 0h1v1h-1zM22 0h1v1h-1zM26 0h1v1h-1zM5 3h1v1h-1zM8 3h1v1h-1zM13 3h1v1h-1zM16 3h4v1h-4zM22 3h2v1h-2zM27 3h1v1h-1zM29 3h1v1h-1zM33 3h2v1h-2zM36 3h1v1h-1z"/></svg>
<svg style="left:669px;top:435px" width="36" height="18" viewBox="0 0 6 3" preserveAspectRatio="none" shape-rendering="crispEdges"><path fill="#707070" d="M2 1h1v1h-1z"/><path fill="#808080" d="M0 1h1v1h-1zM3 1h1v1h-1z"/><path fill="#848484" d="M1 1h1v1h-1z"/><path fill="#949494" d="M4 1h1v1h-1z"/><path fill="#989898" d="M5 1h1v1h-1zM1 2h1v1h-1zM3 2h1v1h-1z"/><path fill="#9c9c9c" d="M4 2h2v1h-2z"/><path fill="#a0a0a0" d="M0 0h2v1h-2z"/><path fill="#a4a4a4" d="M2 0h3v1h-3zM2 2h1v1h-1z"/><path fill="#a8a8a8" d="M0 2h1v1h-1z"/><path fill="#acacac" d="M5 0h1v1h-1z"/></svg>
<svg style="left:738px;top:434px" width="156" height="18" viewBox="0 0 26 3" preserveAspectRatio="none" shape-rendering="crispEdges"><path fill="#787878" d="M6 1h1v1h-1z"/><path fill="#7c7c7c" d="M10 1h1v1h-1zM23 1h1v1h-1z"/><path fill="#808080" d="M3 1h2v1h-2zM7 1h1v1h-1zM11 1h1v1h-1zM18 1h1v1h-1zM22 1h1v1h-1zM25 1h1v1h-1z"/><path fill="#848484" d="M5 1h1v1h-1zM16 1h1v1h-1z"/><path fill="#888888" d="M2 1h1v1h-1z"/><path fill="#8c8c8c" d="M8 1h1v1h-1zM13 1h1v1h-1zM20 1h1v1h-1z"/><path fill="#909090" d="M0 1h1v1h-1zM15 1h1v1h-1zM19 1h1v1h-1z"/><path fill="#949494" d="M1 1h1v1h-1zM9 1h1v1h-1zM12 1h1v1h-1zM17 1h1v1h-1zM21 1h1v1h-1z"/><path fill="#989898" d="M14 1h1v1h-1zM24 1h1v1h-1zM1 2h1v1h-1zM19 2h1v1h-1z"/><path fill="#9c9c9c" d="M3 2h1v1h-1zM9 2h1v1h-1zM12 2h1v1h-1zM14 2h1v1h-1zM24 2h1v1h-1z"/><path fill="#a0a0a0" d="M2 0h2v1h-2zM16 0h1v1h-1zM20 0h1v1h-1zM2 2h1v1h-1zM4 2h2v1h-2zM20 2h1v1h-1zM22 2h1v1h-1z"/><path fill="#a4a4a4" d="M1 0h1v1h-1zM4 0h1v1h-1zM7 0h3v1h-3zM6 2h1v1h-1zM10 2h1v1h-1zM13 2h1v1h-1zM25 2h1v1h-1z"/><path fill="#a8a8a8" d="M0 0h1v1h-1zM5 0h1v1h-1zM10 0h2v1h-2zM15 0h1v1h-1zM18 0h2v1h-2zM25 0h1v1h-1zM7 2h2v1h-2zM15 2h3v1h-3zM21 2h1v1h-1zM23 2h1v1h-1z"/><path fill="#acacac" d="M12 0h3v1h-3zM17 0h1v1h-1zM21 0h2v1h-2zM0 2h1v1h-1zM11 2h1v1h-1zM18 2h1v1h-1z"/><path fill="#b0b0b0" d="M6 0h1v1h-1zM23 0h2v1h-2z"/></svg>
<svg style="left:435px;top:478px" width="234" height="24" viewBox="0 0 39 4" preserveAspectRatio="none" shape-rendering="crispEdges"><path fill="#484b4f" d="M0 1h1v1h-1zM2 1h1v1h-1z"/><path fill="#565a5f" d="M1 1h1v1h-1z"/><path fill="#63686e" d="M2 2h1v1h-1z"/><path fill="#6a6f75" d="M27 1h1v1h-1z"/><path fill="#6e7379" d="M33 1h1v1h-1z"/><path fill="#71767d" d="M2 0h1v1h-1zM0 2h2v1h-2z"/><path fill="#747a81" d="M1 0h1v1h-1zM5 1h1v1h-1zM9 1h1v1h-1zM11 1h1v1h-1zM20 1h1v1h-1zM31 1h1v1h-1zM37 1h1v1h-1z"/><path fill="#787e85" d="M0 0h1v1h-1zM7 1h1v1h-1zM15 1h1v1h-1zM34 1h1v1h-1zM36 1h1v1h-1z"/><path fill="#7b8188" d="M3 1h1v1h-1zM21 1h1v1h-1z"/><path fill="#7f858c" d="M4 1h1v1h-1zM23 1h2v1h-2zM32 1h1v1h-1zM38 1h1v1h-1z"/><path fill="#828890" d="M10 1h1v1h-1zM13 1h1v1h-1zM18 1h1v1h-1zM28 1h1v1h-1zM12 2h1v1h-1zM14 2h1v1h-1zM19 2h3v1h-3zM27 2h1v1h-1zM38 2h1v1h-1z"/><path fill="#868c94" d="M8 1h1v1h-1zM14 1h1v1h-1zM16 1h1v1h-1zM19 1h1v1h-1zM22 1h1v1h-1zM25 1h1v1h-1zM30 1h1v1h-1zM8 2h2v1h-2zM28 2h1v1h-1zM32 2h1v1h-1zM35 2h3v1h-3z"/><path fill="#899098" d="M27 0h1v1h-1zM29 0h1v1h-1zM6 1h1v1h-1zM12 1h1v1h-1zM17 1h1v1h-1zM26 1h1v1h-1zM29 1h1v1h-1zM35 1h1v1h-1zM3 2h1v1h-1zM5 2h1v1h-1zM13 2h1v1h-1zM15 2h2v1h-2zM24 2h1v1h-1zM26 2h1v1h-1zM29 2h1v1h-1z"/><path fill="#8d939b" d="M3 0h1v1h-1zM7 0h2v1h-2zM11 0h1v1h-1zM13 0h1v1h-1zM16 0h3v1h-3zM22 0h2v1h-2zM25 0h1v1h-1zM28 0h1v1h-1zM30 0h1v1h-1zM32 0h2v1h-2zM38 0h1v1h-1zM6 2h2v1h-2zM10 2h1v1h-1zM17 2h2v1h-2zM22 2h2v1h-2zM30 2h1v1h-1zM33 2h2v1h-2z"/><path fill="#90979f" d="M6 0h1v1h-1zM9 0h1v1h-1zM14 0h2v1h-2zM19 0h1v1h-1zM21 0h1v1h-1zM24 0h1v1h-1zM26 0h1v1h-1zM34 0h2v1h-2zM37 0h1v1h-1zM4 2h1v1h-1zM11 2h1v1h-1zM25 2h1v1h-1zM31 2h1v1h-1zM3 3h1v1h-1zM8 3h2v1h-2zM18 3h1v1h-1zM21 3h1v1h-1zM29 3h1v1h-1zM31 3h1v1h-1zM35 3h1v1h-1z"/><path fill="#939aa3" d="M4 0h2v1h-2zM10 0h1v1h-1zM31 0h1v1h-1zM36 0h1v1h-1zM2 3h1v1h-1zM4 3h1v1h-1zM10 3h1v1h-1zM13 3h3v1h-3zM19 3h2v1h-2zM22 3h1v1h-1zM24 3h1v1h-1zM26 3h2v1h-2zM30 3h1v1h-1zM33 3h2v1h-2zM37 3h2v1h-2z"/><path fill="#979ea7" d="M12 0h1v1h-1zM20 0h1v1h-1zM0 3h2v1h-2zM5 3h3v1h-3zM11 3h2v1h-2zM16 3h2v1h-2zM23 3h1v1h-1zM25 3h1v1h-1zM28 3h1v1h-1zM32 3h1v1h-1zM36 3h1v1h-1z"/></svg>
<svg style="left:669px;top:480px" width="36" height="18" viewBox="0 0 6 3" preserveAspectRatio="none" shape-rendering="crispEdges"><path fill="#6a6f75" d="M5 1h1v1h-1z"/><path fill="#6e7379" d="M1 1h1v1h-1zM3 1h1v1h-1z"/><path fill="#71767d" d="M0 1h1v1h-1z"/><path fill="#747a81" d="M4 1h1v1h-1z"/><path fill="#828890" d="M2 1h1v1h-1zM1 2h1v1h-1z"/><path fill="#868c94" d="M0 2h1v1h-1z"/><path fill="#899098" d="M3 2h2v1h-2z"/><path fill="#8d939b" d="M3 0h1v1h-1zM5 0h1v1h-1z"/><path fill="#90979f" d="M5 2h1v1h-1z"/><path fill="#939aa3" d="M2 0h1v1h-1zM4 0h1v1h-1zM2 2h1v1h-1z"/><path fill="#979ea7" d="M0 0h2v1h-2z"/></svg>
<svg style="left:738px;top:479px" width="156" height="18" viewBox="0 0 26 3" preserveAspectRatio="none" shape-rendering="crispEdges"><path fill="#60646a" d="M12 1h1v1h-1z"/><path fill="#6a6f75" d="M0 1h1v1h-1zM17 1h1v1h-1zM25 1h1v1h-1z"/><path fill="#6e7379" d="M3 1h1v1h-1zM5 1h1v1h-1zM15 1h1v1h-1zM19 1h1v1h-1z"/><path fill="#71767d" d="M10 1h1v1h-1zM23 1h1v1h-1z"/><path fill="#747a81" d="M9 1h1v1h-1zM11 1h1v1h-1zM14 1h1v1h-1zM20 1h1v1h-1zM24 1h1v1h-1z"/><path fill="#787e85" d="M2 1h1v1h-1zM6 1h2v1h-2zM16 1h1v1h-1z"/><path fill="#7b8188" d="M13 1h1v1h-1zM18 1h1v1h-1z"/><path fill="#7f858c" d="M21 1h2v1h-2z"/><path fill="#828890" d="M1 1h1v1h-1zM4 1h1v1h-1zM8 1h1v1h-1zM12 2h1v1h-1zM20 2h2v1h-2z"/><path fill="#868c94" d="M9 2h1v1h-1zM14 2h1v1h-1zM17 2h1v1h-1z"/><path fill="#899098" d="M0 2h2v1h-2zM4 2h1v1h-1zM6 2h1v1h-1zM8 2h1v1h-1zM13 2h1v1h-1zM15 2h2v1h-2z"/><path fill="#8d939b" d="M0 0h2v1h-2zM3 0h1v1h-1zM6 0h1v1h-1zM9 0h2v1h-2zM16 0h1v1h-1zM18 0h2v1h-2zM23 0h1v1h-1zM2 2h2v1h-2zM11 2h1v1h-1zM22 2h1v1h-1zM24 2h1v1h-1z"/><path fill="#90979f" d="M2 0h1v1h-1zM7 0h1v1h-1zM11 0h2v1h-2zM14 0h1v1h-1zM20 0h1v1h-1zM22 0h1v1h-1zM5 2h1v1h-1zM7 2h1v1h-1zM18 2h1v1h-1zM23 2h1v1h-1zM25 2h1v1h-1z"/><path fill="#939aa3" d="M5 0h1v1h-1zM8 0h1v1h-1zM21 0h1v1h-1zM10 2h1v1h-1zM19 2h1v1h-1z"/><path fill="#979ea7" d="M4 0h1v1h-1zM13 0h1v1h-1zM15 0h1v1h-1zM17 0h1v1h-1zM24 0h2v1h-2z"/></svg>
<svg style="left:435px;top:523px" width="234" height="24" viewBox="0 0 39 4" preserveAspectRatio="none" shape-rendering="crispEdges"><path fill="#545454" d="M0 1h1v1h-1z"/><path fill="#5c5c5c" d="M2 1h1v1h-1z"/><path fill="#686868" d="M1 1h1v1h-1z"/><path fill="#787878" d="M1 0h1v1h-1zM1 2h1v1h-1z"/><path fill="#808080" d="M17 1h1v1h-1z"/><path fill="#848484" d="M2 0h1v1h-1zM28 1h1v1h-1z"/><path fill="#888888" d="M5 1h1v1h-1zM12 1h3v1h-3zM20 1h1v1h-1zM27 1h1v1h-1zM30 1h1v1h-1zM34 1h1v1h-1zM38 1h1v1h-1zM0 2h1v1h-1zM2 2h1v1h-1z"/><path fill="#8c8c8c" d="M0 0h1v1h-1zM18 1h1v1h-1zM32 1h1v1h-1zM37 1h1v1h-1z"/><path fill="#909090" d="M31 1h1v1h-1z"/><path fill="#949494" d="M4 1h1v1h-1zM8 1h1v1h-1zM25 1h1v1h-1zM36 1h1v1h-1z"/><path fill="#989898" d="M3 1h1v1h-1zM6 1h1v1h-1zM9 1h1v1h-1zM35 1h1v1h-1zM12 2h1v1h-1zM14 2h1v1h-1zM26 2h1v1h-1zM33 2h1v1h-1z"/><path fill="#9c9c9c" d="M7 1h1v1h-1zM10 1h1v1h-1zM19 1h1v1h-1zM21 1h1v1h-1zM24 1h1v1h-1zM29 1h1v1h-1zM15 2h1v1h-1zM19 2h1v1h-1zM23 2h1v1h-1zM31 2h1v1h-1zM35 2h1v1h-1zM37 2h1v1h-1z"/><path fill="#a0a0a0" d="M4 0h3v1h-3zM9 0h1v1h-1zM13 0h1v1h-1zM15 0h1v1h-1zM18 0h1v1h-1zM20 0h1v1h-1zM22 0h2v1h-2zM31 0h1v1h-1zM33 0h1v1h-1zM35 0h1v1h-1zM38 0h1v1h-1zM15 1h2v1h-2zM22 1h2v1h-2zM33 1h1v1h-1zM7 2h1v1h-1zM9 2h3v1h-3zM13 2h1v1h-1zM16 2h1v1h-1zM25 2h1v1h-1zM27 2h3v1h-3zM34 2h1v1h-1zM38 2h1v1h-1z"/><path fill="#a4a4a4" d="M7 0h1v1h-1zM12 0h1v1h-1zM14 0h1v1h-1zM17 0h1v1h-1zM19 0h1v1h-1zM25 0h1v1h-1zM29 0h1v1h-1zM11 1h1v1h-1zM26 1h1v1h-1zM3 2h4v1h-4zM18 2h1v1h-1zM20 2h3v1h-3zM24 2h1v1h-1zM30 2h1v1h-1z"/><path fill="#a8a8a8" d="M3 0h1v1h-1zM24 0h1v1h-1zM26 0h3v1h-3zM32 0h1v1h-1zM8 2h1v1h-1zM17 2h1v1h-1zM32 2h1v1h-1zM36 2h1v1h-1zM7 3h1v1h-1zM12 3h1v1h-1zM14 3h1v1h-1zM17 3h1v1h-1zM22 3h1v1h-1zM25 3h1v1h-1zM29 3h1v1h-1zM32 3h2v1h-2z"/><path fill="#acacac" d="M8 0h1v1h-1zM11 0h1v1h-1zM16 0h1v1h-1zM21 0h1v1h-1zM30 0h1v1h-1zM34 0h1v1h-1zM36 0h1v1h-1zM2 3h1v1h-1zM4 3h2v1h-2zM10 3h2v1h-2zM15 3h1v1h-1zM19 3h2v1h-2zM23 3h1v1h-1zM26 3h2v1h-2zM31 3h1v1h-1zM34 3h1v1h-1zM37 3h1v1h-1z"/><path fill="#b0b0b0" d="M10 0h1v1h-1zM37 0h1v1h-1zM0 3h2v1h-2zM3 3h1v1h-1zM6 3h1v1h-1zM8 3h2v1h-2zM13 3h1v1h-1zM16 3h1v1h-1zM18 3h1v1h-1zM21 3h1v1h-1zM24 3h1v1h-1zM28 3h1v1h-1zM30 3h1v1h-1zM35 3h2v1h-2zM38 3h1v1h-1z"/></svg>
<svg style="left:669px;top:525px" width="36" height="18" viewBox="0 0 6 3" preserveAspectRatio="none" shape-rendering="crispEdges"><path fill="#787878" d="M0 1h1v1h-1z"/><path fill="#7c7c7c" d="M4 1h1v1h-1z"/><path fill="#888888" d="M1 1h2v1h-2zM5 1h1v1h-1z"/><path fill="#8c8c8c" d="M3 1h1v1h-1z"/><path fill="#989898" d="M3 2h1v1h-1z"/><path fill="#9c9c9c" d="M4 2h1v1h-1z"/><path fill="#a0a0a0" d="M0 2h1v1h-1zM5 2h1v1h-1z"/><path fill="#a4a4a4" d="M2 2h1v1h-1z"/><path fill="#a8a8a8" d="M3 0h3v1h-3z"/><path fill="#acacac" d="M0 0h1v1h-1zM1 2h1v1h-1z"/><path fill="#b0b0b0" d="M1 0h2v1h-2z"/></svg>
<svg style="left:738px;top:524px" width="156" height="18" viewBox="0 0 26 3" preserveAspectRatio="none" shape-rendering="crispEdges"><path fill="#707070" d="M16 1h1v1h-1z"/><path fill="#7c7c7c" d="M15 1h1v1h-1zM20 1h1v1h-1z"/><path fill="#808080" d="M3 1h1v1h-1zM5 1h2v1h-2zM8 1h1v1h-1zM10 1h2v1h-2zM25 1h1v1h-1z"/><path fill="#848484" d="M12 1h3v1h-3zM17 1h1v1h-1zM22 1h2v1h-2z"/><path fill="#888888" d="M21 1h1v1h-1z"/><path fill="#8c8c8c" d="M0 1h1v1h-1zM24 1h1v1h-1z"/><path fill="#909090" d="M4 1h1v1h-1zM7 1h1v1h-1zM9 1h1v1h-1z"/><path fill="#949494" d="M1 1h1v1h-1zM18 1h2v1h-2z"/><path fill="#989898" d="M2 1h1v1h-1zM3 2h1v1h-1zM11 2h1v1h-1zM14 2h1v1h-1zM17 2h1v1h-1zM22 2h1v1h-1zM24 2h1v1h-1z"/><path fill="#9c9c9c" d="M7 2h1v1h-1zM9 2h2v1h-2zM13 2h1v1h-1zM15 2h2v1h-2zM20 2h1v1h-1z"/><path fill="#a0a0a0" d="M0 0h1v1h-1zM4 0h1v1h-1zM6 0h1v1h-1zM17 0h1v1h-1zM23 0h3v1h-3zM0 2h2v1h-2zM4 2h1v1h-1zM19 2h1v1h-1z"/><path fill="#a4a4a4" d="M5 0h1v1h-1zM13 0h1v1h-1zM15 0h1v1h-1zM20 0h1v1h-1zM22 0h1v1h-1zM2 2h1v1h-1zM5 2h2v1h-2zM8 2h1v1h-1zM12 2h1v1h-1zM21 2h1v1h-1zM23 2h1v1h-1z"/><path fill="#a8a8a8" d="M2 0h1v1h-1zM7 0h1v1h-1zM9 0h3v1h-3zM16 0h1v1h-1zM19 0h1v1h-1zM18 2h1v1h-1z"/><path fill="#acacac" d="M1 0h1v1h-1zM12 0h1v1h-1zM18 0h1v1h-1zM21 0h1v1h-1zM25 2h1v1h-1z"/><path fill="#b0b0b0" d="M3 0h1v1h-1zM8 0h1v1h-1zM14 0h1v1h-1z"/></svg>
<svg style="left:435px;top:568px" width="234" height="24" viewBox="0 0 39 4" preserveAspectRatio="none" shape-rendering="crispEdges"><path fill="#545454" d="M1 1h1v1h-1z"/><path fill="#585858" d="M0 1h1v1h-1zM2 1h1v1h-1z"/><path fill="#747474" d="M2 2h1v1h-1z"/><path fill="#787878" d="M8 1h1v1h-1zM38 1h1v1h-1z"/><path fill="#7c7c7c" d="M0 0h1v1h-1z"/><path fill="#808080" d="M28 1h1v1h-1z"/><path fill="#848484" d="M2 0h1v1h-1z"/><path fill="#888888" d="M1 0h1v1h-1zM10 1h1v1h-1zM21 1h1v1h-1zM30 1h1v1h-1zM0 2h2v1h-2z"/><path fill="#8c8c8c" d="M6 1h1v1h-1zM9 1h1v1h-1zM12 1h1v1h-1zM20 1h1v1h-1zM24 1h1v1h-1zM37 1h1v1h-1z"/><path fill="#909090" d="M4 1h2v1h-2zM7 1h1v1h-1zM15 1h1v1h-1zM31 1h1v1h-1z"/><path fill="#949494" d="M16 1h1v1h-1zM23 1h1v1h-1zM29 1h1v1h-1zM33 1h3v1h-3z"/><path fill="#989898" d="M11 1h1v1h-1zM14 1h1v1h-1zM17 1h1v1h-1zM25 1h1v1h-1zM27 1h1v1h-1zM7 2h2v1h-2zM14 2h1v1h-1zM16 2h1v1h-1zM20 2h1v1h-1zM24 2h1v1h-1zM26 2h1v1h-1zM30 2h1v1h-1zM34 2h3v1h-3z"/><path fill="#9c9c9c" d="M26 1h1v1h-1zM36 1h1v1h-1zM10 2h1v1h-1zM23 2h1v1h-1zM25 2h1v1h-1zM27 2h3v1h-3zM37 2h1v1h-1z"/><path fill="#a0a0a0" d="M6 0h1v1h-1zM11 0h1v1h-1zM22 0h1v1h-1zM29 0h1v1h-1zM33 0h1v1h-1zM36 0h1v1h-1zM3 1h1v1h-1zM13 1h1v1h-1zM18 1h2v1h-2zM32 1h1v1h-1zM3 2h1v1h-1zM9 2h1v1h-1zM11 2h1v1h-1zM15 2h1v1h-1zM31 2h2v1h-2zM38 2h1v1h-1z"/><path fill="#a4a4a4" d="M4 0h1v1h-1zM8 0h1v1h-1zM10 0h1v1h-1zM12 0h1v1h-1zM14 0h1v1h-1zM16 0h1v1h-1zM20 0h2v1h-2zM26 0h1v1h-1zM34 0h1v1h-1zM37 0h1v1h-1zM22 1h1v1h-1zM5 2h1v1h-1zM12 2h1v1h-1zM17 2h2v1h-2zM0 3h1v1h-1z"/><path fill="#a8a8a8" d="M3 0h1v1h-1zM7 0h1v1h-1zM9 0h1v1h-1zM17 0h1v1h-1zM23 0h3v1h-3zM27 0h1v1h-1zM30 0h1v1h-1zM4 2h1v1h-1zM6 2h1v1h-1zM13 2h1v1h-1zM19 2h1v1h-1zM21 2h2v1h-2zM33 2h1v1h-1zM6 3h1v1h-1zM9 3h1v1h-1zM11 3h1v1h-1zM13 3h2v1h-2zM16 3h1v1h-1zM22 3h3v1h-3zM26 3h1v1h-1zM29 3h3v1h-3zM37 3h2v1h-2z"/><path fill="#acacac" d="M5 0h1v1h-1zM13 0h1v1h-1zM15 0h1v1h-1zM18 0h2v1h-2zM28 0h1v1h-1zM31 0h2v1h-2zM38 0h1v1h-1zM1 3h2v1h-2zM4 3h1v1h-1zM8 3h1v1h-1zM10 3h1v1h-1zM15 3h1v1h-1zM17 3h2v1h-2zM21 3h1v1h-1zM25 3h1v1h-1zM34 3h1v1h-1zM36 3h1v1h-1z"/><path fill="#b0b0b0" d="M35 0h1v1h-1zM3 3h1v1h-1zM5 3h1v1h-1zM7 3h1v1h-1zM12 3h1v1h-1zM19 3h2v1h-2zM27 3h2v1h-2zM32 3h2v1h-2zM35 3h1v1h-1z"/></svg>
<svg style="left:669px;top:570px" width="36" height="18" viewBox="0 0 6 3" preserveAspectRatio="none" shape-rendering="crispEdges"><path fill="#888888" d="M1 1h2v1h-2zM5 1h1v1h-1z"/><path fill="#949494" d="M0 1h1v1h-1zM4 1h1v1h-1z"/><path fill="#989898" d="M3 1h1v1h-1zM1 2h1v1h-1z"/><path fill="#9c9c9c" d="M4 2h1v1h-1z"/><path fill="#a0a0a0" d="M3 0h1v1h-1zM5 0h1v1h-1zM2 2h1v1h-1zM5 2h1v1h-1z"/><path fill="#a8a8a8" d="M0 2h1v1h-1zM3 2h1v1h-1z"/><path fill="#acacac" d="M0 0h2v1h-2zM4 0h1v1h-1z"/><path fill="#b0b0b0" d="M2 0h1v1h-1z"/></svg>
<svg style="left:738px;top:569px" width="156" height="18" viewBox="0 0 26 3" preserveAspectRatio="none" shape-rendering="crispEdges"><path fill="#787878" d="M21 1h1v1h-1z"/><path fill="#7c7c7c" d="M2 1h1v1h-1z"/><path fill="#808080" d="M0 1h1v1h-1zM4 1h1v1h-1zM7 1h1v1h-1zM10 1h1v1h-1zM13 1h1v1h-1z"/><path fill="#848484" d="M3 1h1v1h-1zM12 1h1v1h-1zM14 1h1v1h-1zM16 1h2v1h-2zM22 1h1v1h-1z"/><path fill="#888888" d="M1 1h1v1h-1zM11 1h1v1h-1zM18 1h1v1h-1zM25 1h1v1h-1z"/><path fill="#8c8c8c" d="M6 1h1v1h-1zM8 1h2v1h-2zM19 1h2v1h-2zM23 1h1v1h-1z"/><path fill="#909090" d="M5 1h1v1h-1zM15 1h1v1h-1zM24 1h1v1h-1z"/><path fill="#989898" d="M9 2h2v1h-2zM13 2h1v1h-1zM17 2h1v1h-1zM22 2h1v1h-1z"/><path fill="#9c9c9c" d="M0 2h1v1h-1zM7 2h1v1h-1zM11 2h1v1h-1zM24 2h2v1h-2z"/><path fill="#a0a0a0" d="M2 0h1v1h-1zM12 0h1v1h-1zM18 0h3v1h-3zM23 0h1v1h-1zM1 2h1v1h-1zM3 2h1v1h-1zM5 2h2v1h-2zM8 2h1v1h-1zM15 2h1v1h-1zM21 2h1v1h-1z"/><path fill="#a4a4a4" d="M4 0h1v1h-1zM6 0h2v1h-2zM14 0h1v1h-1zM24 0h1v1h-1zM4 2h1v1h-1zM16 2h1v1h-1zM19 2h2v1h-2z"/><path fill="#a8a8a8" d="M0 0h1v1h-1zM10 0h1v1h-1zM13 0h1v1h-1zM21 0h2v1h-2zM25 0h1v1h-1zM2 2h1v1h-1zM12 2h1v1h-1zM14 2h1v1h-1zM18 2h1v1h-1zM23 2h1v1h-1z"/><path fill="#acacac" d="M1 0h1v1h-1zM3 0h1v1h-1zM8 0h2v1h-2zM15 0h2v1h-2z"/><path fill="#b0b0b0" d="M5 0h1v1h-1zM11 0h1v1h-1zM17 0h1v1h-1z"/></svg>
<svg style="left:435px;top:613px" width="234" height="24" viewBox="0 0 39 4" preserveAspectRatio="none" shape-rendering="crispEdges"><path fill="#545454" d="M0 1h1v1h-1z"/><path fill="#585858" d="M2 1h1v1h-1z"/><path fill="#606060" d="M1 1h1v1h-1z"/><path fill="#787878" d="M11 1h1v1h-1z"/><path fill="#7c7c7c" d="M1 2h1v1h-1z"/><path fill="#848484" d="M0 0h2v1h-2zM0 2h1v1h-1zM2 2h1v1h-1z"/><path fill="#888888" d="M19 1h1v1h-1zM21 1h1v1h-1zM31 1h1v1h-1zM33 1h1v1h-1z"/><path fill="#8c8c8c" d="M2 0h1v1h-1zM5 1h1v1h-1zM8 1h2v1h-2zM26 1h1v1h-1z"/><path fill="#909090" d="M6 1h1v1h-1zM13 1h1v1h-1zM20 1h1v1h-1zM32 1h1v1h-1z"/><path fill="#949494" d="M18 1h1v1h-1zM23 1h2v1h-2zM27 1h1v1h-1zM38 1h1v1h-1z"/><path fill="#989898" d="M4 1h1v1h-1zM12 1h1v1h-1zM15 1h2v1h-2zM22 1h1v1h-1zM25 1h1v1h-1zM29 1h2v1h-2zM34 1h1v1h-1zM37 1h1v1h-1zM8 2h1v1h-1zM10 2h1v1h-1zM13 2h1v1h-1zM15 2h2v1h-2zM19 2h1v1h-1zM22 2h1v1h-1zM24 2h2v1h-2zM38 2h1v1h-1z"/><path fill="#9c9c9c" d="M17 1h1v1h-1zM35 1h2v1h-2zM3 2h1v1h-1zM5 2h1v1h-1zM7 2h1v1h-1zM26 2h2v1h-2zM34 2h1v1h-1zM36 2h1v1h-1z"/><path fill="#a0a0a0" d="M8 0h1v1h-1zM13 0h2v1h-2zM16 0h1v1h-1zM22 0h1v1h-1zM34 0h1v1h-1zM3 1h1v1h-1zM7 1h1v1h-1zM14 1h1v1h-1zM28 1h1v1h-1zM11 2h1v1h-1zM17 2h1v1h-1zM20 2h1v1h-1zM31 2h1v1h-1z"/><path fill="#a4a4a4" d="M4 0h2v1h-2zM11 0h1v1h-1zM19 0h1v1h-1zM10 1h1v1h-1zM6 2h1v1h-1zM14 2h1v1h-1zM21 2h1v1h-1zM28 2h1v1h-1zM37 2h1v1h-1zM0 3h2v1h-2z"/><path fill="#a8a8a8" d="M3 0h1v1h-1zM6 0h1v1h-1zM10 0h1v1h-1zM21 0h1v1h-1zM26 0h4v1h-4zM33 0h1v1h-1zM38 0h1v1h-1zM4 2h1v1h-1zM9 2h1v1h-1zM12 2h1v1h-1zM18 2h1v1h-1zM23 2h1v1h-1zM29 2h2v1h-2zM32 2h2v1h-2zM35 2h1v1h-1zM4 3h5v1h-5zM14 3h1v1h-1zM16 3h1v1h-1zM20 3h1v1h-1zM22 3h1v1h-1zM25 3h2v1h-2zM29 3h1v1h-1zM31 3h1v1h-1zM33 3h1v1h-1zM37 3h2v1h-2z"/><path fill="#acacac" d="M9 0h1v1h-1zM12 0h1v1h-1zM15 0h1v1h-1zM17 0h2v1h-2zM20 0h1v1h-1zM23 0h3v1h-3zM30 0h1v1h-1zM32 0h1v1h-1zM35 0h3v1h-3zM2 3h1v1h-1zM10 3h2v1h-2zM13 3h1v1h-1zM19 3h1v1h-1zM23 3h2v1h-2zM27 3h1v1h-1zM32 3h1v1h-1zM34 3h1v1h-1zM36 3h1v1h-1z"/><path fill="#b0b0b0" d="M7 0h1v1h-1zM31 0h1v1h-1zM3 3h1v1h-1zM9 3h1v1h-1zM12 3h1v1h-1zM15 3h1v1h-1zM17 3h2v1h-2zM21 3h1v1h-1zM28 3h1v1h-1zM30 3h1v1h-1zM35 3h1v1h-1z"/></svg>
<svg style="left:669px;top:615px" width="36" height="18" viewBox="0 0 6 3" preserveAspectRatio="none" shape-rendering="crispEdges"><path fill="#707070" d="M2 1h1v1h-1z"/><path fill="#808080" d="M1 1h1v1h-1z"/><path fill="#848484" d="M0 1h1v1h-1z"/><path fill="#8c8c8c" d="M4 1h1v1h-1z"/><path fill="#909090" d="M5 1h1v1h-1z"/><path fill="#989898" d="M3 1h1v1h-1zM1 2h1v1h-1z"/><path fill="#9c9c9c" d="M2 2h1v1h-1zM5 2h1v1h-1z"/><path fill="#a0a0a0" d="M2 0h1v1h-1zM4 0h1v1h-1z"/><path fill="#a4a4a4" d="M0 2h1v1h-1zM3 2h1v1h-1z"/><path fill="#a8a8a8" d="M0 0h1v1h-1zM5 0h1v1h-1zM4 2h1v1h-1z"/><path fill="#acacac" d="M1 0h1v1h-1z"/><path fill="#b0b0b0" d="M3 0h1v1h-1z"/></svg>
<svg style="left:738px;top:614px" width="156" height="18" viewBox="0 0 26 3" preserveAspectRatio="none" shape-rendering="crispEdges"><path fill="#707070" d="M2 1h1v1h-1z"/><path fill="#808080" d="M5 1h1v1h-1zM7 1h1v1h-1zM22 1h3v1h-3z"/><path fill="#848484" d="M1 1h1v1h-1zM4 1h1v1h-1zM13 1h1v1h-1zM15 1h1v1h-1zM25 1h1v1h-1z"/><path fill="#888888" d="M0 1h1v1h-1zM3 1h1v1h-1zM10 1h1v1h-1z"/><path fill="#8c8c8c" d="M6 1h1v1h-1zM8 1h1v1h-1zM14 1h1v1h-1zM20 1h1v1h-1z"/><path fill="#909090" d="M12 1h1v1h-1zM16 1h1v1h-1zM18 1h2v1h-2zM21 1h1v1h-1z"/><path fill="#949494" d="M9 1h1v1h-1zM11 1h1v1h-1zM17 1h1v1h-1z"/><path fill="#989898" d="M1 2h1v1h-1zM5 2h1v1h-1zM7 2h1v1h-1zM12 2h2v1h-2zM19 2h1v1h-1zM21 2h1v1h-1z"/><path fill="#9c9c9c" d="M3 2h1v1h-1zM8 2h2v1h-2zM11 2h1v1h-1zM18 2h1v1h-1zM22 2h1v1h-1zM24 2h1v1h-1z"/><path fill="#a0a0a0" d="M4 0h1v1h-1zM12 0h1v1h-1zM4 2h1v1h-1zM10 2h1v1h-1zM15 2h1v1h-1zM17 2h1v1h-1zM20 2h1v1h-1zM23 2h1v1h-1z"/><path fill="#a4a4a4" d="M6 0h3v1h-3zM11 0h1v1h-1zM16 0h1v1h-1zM21 0h2v1h-2zM0 2h1v1h-1zM6 2h1v1h-1zM25 2h1v1h-1z"/><path fill="#a8a8a8" d="M1 0h1v1h-1zM5 0h1v1h-1zM13 0h1v1h-1zM25 0h1v1h-1zM2 2h1v1h-1zM14 2h1v1h-1zM16 2h1v1h-1z"/><path fill="#acacac" d="M0 0h1v1h-1zM2 0h1v1h-1zM9 0h2v1h-2zM14 0h2v1h-2zM17 0h4v1h-4zM23 0h2v1h-2z"/><path fill="#b0b0b0" d="M3 0h1v1h-1z"/></svg>
<svg style="left:435px;top:658px" width="234" height="24" viewBox="0 0 39 4" preserveAspectRatio="none" shape-rendering="crispEdges"><path fill="#646464" d="M0 1h3v1h-3z"/><path fill="#787878" d="M2 2h1v1h-1z"/><path fill="#7c7c7c" d="M37 1h1v1h-1zM1 2h1v1h-1z"/><path fill="#808080" d="M0 0h1v1h-1zM6 1h1v1h-1zM26 1h1v1h-1zM0 2h1v1h-1z"/><path fill="#848484" d="M1 0h2v1h-2z"/><path fill="#888888" d="M4 1h1v1h-1zM9 1h1v1h-1zM12 1h1v1h-1zM16 1h1v1h-1zM31 1h1v1h-1z"/><path fill="#8c8c8c" d="M8 1h1v1h-1zM10 1h1v1h-1zM15 1h1v1h-1zM25 1h1v1h-1zM28 1h1v1h-1zM33 1h2v1h-2zM38 1h1v1h-1z"/><path fill="#909090" d="M3 1h1v1h-1zM11 1h1v1h-1zM18 1h1v1h-1zM27 1h1v1h-1zM30 1h1v1h-1zM32 1h1v1h-1z"/><path fill="#949494" d="M17 1h1v1h-1zM21 1h1v1h-1zM23 1h1v1h-1zM36 1h1v1h-1z"/><path fill="#989898" d="M7 1h1v1h-1zM8 2h1v1h-1zM16 2h1v1h-1zM18 2h1v1h-1zM22 2h2v1h-2zM27 2h1v1h-1zM30 2h1v1h-1z"/><path fill="#9c9c9c" d="M13 1h2v1h-2zM19 1h1v1h-1zM22 1h1v1h-1zM29 1h1v1h-1zM35 1h1v1h-1zM3 2h1v1h-1zM6 2h1v1h-1zM11 2h2v1h-2zM15 2h1v1h-1zM21 2h1v1h-1zM26 2h1v1h-1zM31 2h1v1h-1zM38 2h1v1h-1z"/><path fill="#a0a0a0" d="M7 0h1v1h-1zM11 0h1v1h-1zM16 0h1v1h-1zM19 0h1v1h-1zM22 0h1v1h-1zM24 0h1v1h-1zM31 0h1v1h-1zM5 1h1v1h-1zM20 1h1v1h-1zM24 1h1v1h-1zM7 2h1v1h-1zM17 2h1v1h-1zM19 2h1v1h-1zM24 2h2v1h-2zM28 2h1v1h-1zM32 2h1v1h-1zM36 2h2v1h-2z"/><path fill="#a4a4a4" d="M4 0h1v1h-1zM6 0h1v1h-1zM13 0h1v1h-1zM17 0h1v1h-1zM21 0h1v1h-1zM25 0h1v1h-1zM27 0h1v1h-1zM29 0h1v1h-1zM33 0h2v1h-2zM10 2h1v1h-1zM13 2h2v1h-2zM20 2h1v1h-1zM29 2h1v1h-1zM33 2h2v1h-2zM1 3h2v1h-2z"/><path fill="#a8a8a8" d="M5 0h1v1h-1zM8 0h2v1h-2zM15 0h1v1h-1zM18 0h1v1h-1zM20 0h1v1h-1zM28 0h1v1h-1zM32 0h1v1h-1zM37 0h1v1h-1zM4 2h2v1h-2zM9 2h1v1h-1zM35 2h1v1h-1zM3 3h1v1h-1zM6 3h1v1h-1zM13 3h1v1h-1zM18 3h1v1h-1zM21 3h1v1h-1zM23 3h1v1h-1zM33 3h3v1h-3zM37 3h2v1h-2z"/><path fill="#acacac" d="M3 0h1v1h-1zM10 0h1v1h-1zM12 0h1v1h-1zM14 0h1v1h-1zM23 0h1v1h-1zM26 0h1v1h-1zM30 0h1v1h-1zM35 0h1v1h-1zM38 0h1v1h-1zM0 3h1v1h-1zM4 3h2v1h-2zM9 3h1v1h-1zM12 3h1v1h-1zM15 3h3v1h-3zM20 3h1v1h-1zM22 3h1v1h-1zM25 3h1v1h-1zM31 3h1v1h-1z"/><path fill="#b0b0b0" d="M36 0h1v1h-1zM7 3h2v1h-2zM10 3h2v1h-2zM14 3h1v1h-1zM19 3h1v1h-1zM24 3h1v1h-1zM26 3h5v1h-5zM32 3h1v1h-1zM36 3h1v1h-1z"/></svg>
<svg style="left:669px;top:660px" width="36" height="18" viewBox="0 0 6 3" preserveAspectRatio="none" shape-rendering="crispEdges"><path fill="#787878" d="M1 1h1v1h-1zM3 1h1v1h-1z"/><path fill="#808080" d="M5 1h1v1h-1z"/><path fill="#888888" d="M4 1h1v1h-1z"/><path fill="#949494" d="M2 1h1v1h-1z"/><path fill="#989898" d="M0 1h1v1h-1zM3 2h3v1h-3z"/><path fill="#9c9c9c" d="M2 2h1v1h-1z"/><path fill="#a0a0a0" d="M0 2h2v1h-2z"/><path fill="#a4a4a4" d="M1 0h1v1h-1zM4 0h1v1h-1z"/><path fill="#a8a8a8" d="M2 0h1v1h-1z"/><path fill="#acacac" d="M0 0h1v1h-1zM3 0h1v1h-1z"/><path fill="#b0b0b0" d="M5 0h1v1h-1z"/></svg>
<svg style="left:738px;top:659px" width="156" height="18" viewBox="0 0 26 3" preserveAspectRatio="none" shape-rendering="crispEdges"><path fill="#707070" d="M14 1h1v1h-1z"/><path fill="#747474" d="M3 1h1v1h-1z"/><path fill="#7c7c7c" d="M1 1h1v1h-1z"/><path fill="#808080" d="M0 1h1v1h-1zM24 1h1v1h-1z"/><path fill="#848484" d="M8 1h1v1h-1z"/><path fill="#888888" d="M5 1h1v1h-1zM13 1h1v1h-1zM18 1h1v1h-1zM25 1h1v1h-1z"/><path fill="#8c8c8c" d="M6 1h1v1h-1zM9 1h3v1h-3z"/><path fill="#909090" d="M7 1h1v1h-1zM16 1h2v1h-2zM19 1h1v1h-1zM23 1h1v1h-1z"/><path fill="#949494" d="M15 1h1v1h-1z"/><path fill="#989898" d="M2 1h1v1h-1zM4 1h1v1h-1zM12 1h1v1h-1zM20 1h3v1h-3zM8 2h1v1h-1zM13 2h1v1h-1zM17 2h1v1h-1z"/><path fill="#9c9c9c" d="M3 2h1v1h-1zM9 2h3v1h-3zM14 2h1v1h-1zM18 2h1v1h-1zM22 2h1v1h-1zM25 2h1v1h-1z"/><path fill="#a0a0a0" d="M1 0h1v1h-1zM16 0h1v1h-1zM22 0h2v1h-2zM1 2h1v1h-1zM7 2h1v1h-1zM15 2h1v1h-1zM20 2h1v1h-1z"/><path fill="#a4a4a4" d="M6 0h1v1h-1zM8 0h2v1h-2zM11 0h2v1h-2zM15 0h1v1h-1zM0 2h1v1h-1zM5 2h2v1h-2zM21 2h1v1h-1zM24 2h1v1h-1z"/><path fill="#a8a8a8" d="M2 0h1v1h-1zM7 0h1v1h-1zM10 0h1v1h-1zM19 0h2v1h-2zM2 2h1v1h-1zM4 2h1v1h-1zM12 2h1v1h-1zM19 2h1v1h-1zM23 2h1v1h-1z"/><path fill="#acacac" d="M0 0h1v1h-1zM4 0h1v1h-1zM14 0h1v1h-1zM21 0h1v1h-1zM25 0h1v1h-1zM16 2h1v1h-1z"/><path fill="#b0b0b0" d="M3 0h1v1h-1zM5 0h1v1h-1zM13 0h1v1h-1zM17 0h2v1h-2zM24 0h1v1h-1z"/></svg>
<svg style="left:435px;top:703px" width="234" height="24" viewBox="0 0 39 4" preserveAspectRatio="none" shape-rendering="crispEdges"><path fill="#545454" d="M2 1h1v1h-1z"/><path fill="#5c5c5c" d="M1 1h1v1h-1z"/><path fill="#686868" d="M0 1h1v1h-1z"/><path fill="#707070" d="M29 1h1v1h-1z"/><path fill="#747474" d="M27 1h1v1h-1z"/><path fill="#787878" d="M0 2h1v1h-1z"/><path fill="#808080" d="M16 1h1v1h-1z"/><path fill="#888888" d="M0 0h1v1h-1zM10 1h1v1h-1zM18 1h2v1h-2zM30 1h1v1h-1zM1 2h2v1h-2z"/><path fill="#8c8c8c" d="M1 0h1v1h-1zM7 1h1v1h-1zM20 1h1v1h-1zM23 1h1v1h-1zM38 1h1v1h-1z"/><path fill="#909090" d="M2 0h1v1h-1zM3 1h2v1h-2zM9 1h1v1h-1zM11 1h1v1h-1zM15 1h1v1h-1zM21 1h1v1h-1zM24 1h1v1h-1zM26 1h1v1h-1zM37 1h1v1h-1z"/><path fill="#949494" d="M17 1h1v1h-1zM28 1h1v1h-1zM33 1h1v1h-1zM35 1h1v1h-1z"/><path fill="#989898" d="M12 1h2v1h-2zM32 1h1v1h-1zM36 1h1v1h-1zM3 2h1v1h-1zM14 2h1v1h-1zM20 2h1v1h-1zM23 2h1v1h-1zM29 2h1v1h-1zM38 2h1v1h-1z"/><path fill="#9c9c9c" d="M5 1h1v1h-1zM8 1h1v1h-1zM14 1h1v1h-1zM22 1h1v1h-1zM25 1h1v1h-1zM34 1h1v1h-1zM4 2h2v1h-2zM19 2h1v1h-1zM21 2h1v1h-1zM24 2h2v1h-2zM37 2h1v1h-1z"/><path fill="#a0a0a0" d="M3 0h1v1h-1zM5 0h1v1h-1zM7 0h1v1h-1zM12 0h1v1h-1zM14 0h1v1h-1zM20 0h1v1h-1zM23 0h1v1h-1zM26 0h1v1h-1zM28 0h2v1h-2zM33 0h1v1h-1zM36 0h1v1h-1zM38 0h1v1h-1zM6 1h1v1h-1zM31 1h1v1h-1zM6 2h1v1h-1zM8 2h1v1h-1zM12 2h2v1h-2zM15 2h1v1h-1zM18 2h1v1h-1zM26 2h1v1h-1zM28 2h1v1h-1zM31 2h2v1h-2z"/><path fill="#a4a4a4" d="M9 0h1v1h-1zM17 0h2v1h-2zM21 0h1v1h-1zM25 0h1v1h-1zM30 0h1v1h-1zM34 0h1v1h-1zM37 0h1v1h-1zM7 2h1v1h-1zM10 2h2v1h-2zM17 2h1v1h-1zM22 2h1v1h-1zM27 2h1v1h-1zM2 3h1v1h-1z"/><path fill="#a8a8a8" d="M22 0h1v1h-1zM27 0h1v1h-1zM32 0h1v1h-1zM9 2h1v1h-1zM16 2h1v1h-1zM30 2h1v1h-1zM33 2h4v1h-4zM3 3h1v1h-1zM8 3h1v1h-1zM11 3h2v1h-2zM14 3h1v1h-1zM21 3h1v1h-1zM27 3h1v1h-1zM35 3h2v1h-2zM38 3h1v1h-1z"/><path fill="#acacac" d="M6 0h1v1h-1zM8 0h1v1h-1zM15 0h2v1h-2zM19 0h1v1h-1zM24 0h1v1h-1zM31 0h1v1h-1zM35 0h1v1h-1zM0 3h1v1h-1zM4 3h1v1h-1zM9 3h2v1h-2zM15 3h2v1h-2zM18 3h1v1h-1zM22 3h1v1h-1zM25 3h2v1h-2zM29 3h1v1h-1zM31 3h2v1h-2zM34 3h1v1h-1zM37 3h1v1h-1z"/><path fill="#b0b0b0" d="M4 0h1v1h-1zM10 0h2v1h-2zM13 0h1v1h-1zM1 3h1v1h-1zM5 3h3v1h-3zM13 3h1v1h-1zM17 3h1v1h-1zM19 3h2v1h-2zM23 3h2v1h-2zM28 3h1v1h-1zM30 3h1v1h-1zM33 3h1v1h-1z"/></svg>
<svg style="left:669px;top:705px" width="36" height="18" viewBox="0 0 6 3" preserveAspectRatio="none" shape-rendering="crispEdges"><path fill="#787878" d="M2 1h1v1h-1z"/><path fill="#848484" d="M1 1h1v1h-1z"/><path fill="#888888" d="M0 1h1v1h-1z"/><path fill="#909090" d="M5 1h1v1h-1z"/><path fill="#949494" d="M3 1h2v1h-2z"/><path fill="#989898" d="M1 2h1v1h-1zM4 2h1v1h-1z"/><path fill="#9c9c9c" d="M2 2h1v1h-1z"/><path fill="#a0a0a0" d="M2 0h1v1h-1zM0 2h1v1h-1z"/><path fill="#a4a4a4" d="M0 0h1v1h-1z"/><path fill="#a8a8a8" d="M1 0h1v1h-1zM3 2h1v1h-1zM5 2h1v1h-1z"/><path fill="#acacac" d="M4 0h1v1h-1z"/><path fill="#b0b0b0" d="M3 0h1v1h-1zM5 0h1v1h-1z"/></svg>
<svg style="left:738px;top:704px" width="156" height="18" viewBox="0 0 26 3" preserveAspectRatio="none" shape-rendering="crispEdges"><path fill="#787878" d="M25 1h1v1h-1z"/><path fill="#7c7c7c" d="M4 1h1v1h-1zM6 1h2v1h-2zM9 1h1v1h-1zM12 1h1v1h-1zM18 1h1v1h-1zM23 1h1v1h-1z"/><path fill="#808080" d="M1 1h2v1h-2zM20 1h1v1h-1zM24 1h1v1h-1z"/><path fill="#848484" d="M0 1h1v1h-1zM13 1h1v1h-1z"/><path fill="#888888" d="M3 1h1v1h-1zM8 1h1v1h-1zM10 1h1v1h-1zM16 1h1v1h-1zM22 1h1v1h-1z"/><path fill="#8c8c8c" d="M5 1h1v1h-1zM15 1h1v1h-1zM17 1h1v1h-1z"/><path fill="#909090" d="M14 1h1v1h-1zM19 1h1v1h-1z"/><path fill="#949494" d="M11 1h1v1h-1zM21 1h1v1h-1z"/><path fill="#989898" d="M13 2h1v1h-1z"/><path fill="#9c9c9c" d="M5 2h1v1h-1zM9 2h1v1h-1zM25 2h1v1h-1z"/><path fill="#a0a0a0" d="M12 0h1v1h-1zM16 0h1v1h-1zM18 0h1v1h-1zM1 2h1v1h-1zM8 2h1v1h-1zM11 2h1v1h-1zM15 2h1v1h-1zM20 2h2v1h-2zM24 2h1v1h-1z"/><path fill="#a4a4a4" d="M0 0h1v1h-1zM6 0h1v1h-1zM9 0h1v1h-1zM13 0h1v1h-1zM24 0h1v1h-1zM0 2h1v1h-1zM12 2h1v1h-1zM18 2h1v1h-1z"/><path fill="#a8a8a8" d="M1 0h1v1h-1zM10 0h2v1h-2zM14 0h2v1h-2zM17 0h1v1h-1zM21 0h2v1h-2zM25 0h1v1h-1zM2 2h3v1h-3zM6 2h2v1h-2zM10 2h1v1h-1zM17 2h1v1h-1zM19 2h1v1h-1zM22 2h2v1h-2z"/><path fill="#acacac" d="M2 0h1v1h-1zM4 0h2v1h-2zM8 0h1v1h-1zM19 0h1v1h-1zM14 2h1v1h-1zM16 2h1v1h-1z"/><path fill="#b0b0b0" d="M3 0h1v1h-1zM7 0h1v1h-1zM20 0h1v1h-1zM23 0h1v1h-1z"/></svg>
<svg style="left:435px;top:748px" width="234" height="24" viewBox="0 0 39 4" preserveAspectRatio="none" shape-rendering="crispEdges"><path fill="#505050" d="M2 1h1v1h-1z"/><path fill="#5c5c5c" d="M1 1h1v1h-1z"/><path fill="#646464" d="M0 1h1v1h-1z"/><path fill="#747474" d="M19 1h1v1h-1zM0 2h1v1h-1z"/><path fill="#787878" d="M1 0h1v1h-1z"/><path fill="#7c7c7c" d="M2 2h1v1h-1z"/><path fill="#808080" d="M0 0h1v1h-1z"/><path fill="#888888" d="M2 0h1v1h-1zM7 1h1v1h-1zM23 1h1v1h-1zM31 1h1v1h-1zM1 2h1v1h-1z"/><path fill="#8c8c8c" d="M3 1h1v1h-1zM9 1h2v1h-2zM20 1h1v1h-1zM24 1h1v1h-1z"/><path fill="#909090" d="M8 1h1v1h-1zM12 1h1v1h-1zM18 1h1v1h-1zM29 1h1v1h-1zM32 1h1v1h-1z"/><path fill="#949494" d="M4 1h2v1h-2zM11 1h1v1h-1zM13 1h1v1h-1zM15 1h1v1h-1zM22 1h1v1h-1zM27 1h1v1h-1zM36 1h1v1h-1z"/><path fill="#989898" d="M14 1h1v1h-1zM21 1h1v1h-1zM4 2h2v1h-2zM11 2h3v1h-3zM15 2h3v1h-3zM22 2h1v1h-1zM29 2h1v1h-1zM33 2h1v1h-1zM37 2h1v1h-1z"/><path fill="#9c9c9c" d="M6 1h1v1h-1zM25 1h1v1h-1zM33 1h1v1h-1zM35 1h1v1h-1zM37 1h1v1h-1zM3 2h1v1h-1zM6 2h1v1h-1zM8 2h1v1h-1zM19 2h1v1h-1zM23 2h2v1h-2zM26 2h1v1h-1zM35 2h2v1h-2z"/><path fill="#a0a0a0" d="M4 0h1v1h-1zM9 0h2v1h-2zM12 0h2v1h-2zM23 0h1v1h-1zM34 0h4v1h-4zM16 1h2v1h-2zM26 1h1v1h-1zM28 1h1v1h-1zM30 1h1v1h-1zM34 1h1v1h-1zM14 2h1v1h-1zM31 2h1v1h-1zM34 2h1v1h-1zM38 2h1v1h-1z"/><path fill="#a4a4a4" d="M6 0h2v1h-2zM11 0h1v1h-1zM15 0h2v1h-2zM19 0h3v1h-3zM25 0h1v1h-1zM28 0h1v1h-1zM32 0h1v1h-1zM38 1h1v1h-1zM10 2h1v1h-1zM18 2h1v1h-1zM21 2h1v1h-1zM32 2h1v1h-1zM1 3h2v1h-2z"/><path fill="#a8a8a8" d="M5 0h1v1h-1zM17 0h2v1h-2zM24 0h1v1h-1zM29 0h1v1h-1zM33 0h1v1h-1zM7 2h1v1h-1zM9 2h1v1h-1zM20 2h1v1h-1zM25 2h1v1h-1zM27 2h2v1h-2zM30 2h1v1h-1zM5 3h3v1h-3zM9 3h1v1h-1zM14 3h1v1h-1zM17 3h1v1h-1zM35 3h1v1h-1z"/><path fill="#acacac" d="M3 0h1v1h-1zM8 0h1v1h-1zM26 0h2v1h-2zM30 0h2v1h-2zM38 0h1v1h-1zM0 3h1v1h-1zM3 3h2v1h-2zM10 3h1v1h-1zM12 3h2v1h-2zM15 3h1v1h-1zM19 3h1v1h-1zM21 3h1v1h-1zM23 3h1v1h-1zM25 3h1v1h-1zM28 3h4v1h-4zM33 3h2v1h-2zM36 3h3v1h-3z"/><path fill="#b0b0b0" d="M14 0h1v1h-1zM22 0h1v1h-1zM8 3h1v1h-1zM11 3h1v1h-1zM16 3h1v1h-1zM18 3h1v1h-1zM20 3h1v1h-1zM22 3h1v1h-1zM24 3h1v1h-1zM26 3h2v1h-2zM32 3h1v1h-1z"/></svg>
<svg style="left:669px;top:750px" width="36" height="18" viewBox="0 0 6 3" preserveAspectRatio="none" shape-rendering="crispEdges"><path fill="#707070" d="M2 1h1v1h-1z"/><path fill="#808080" d="M1 1h1v1h-1z"/><path fill="#848484" d="M0 1h1v1h-1z"/><path fill="#888888" d="M3 1h2v1h-2z"/><path fill="#8c8c8c" d="M5 1h1v1h-1z"/><path fill="#989898" d="M3 2h1v1h-1z"/><path fill="#a0a0a0" d="M1 0h1v1h-1zM0 2h1v1h-1z"/><path fill="#a4a4a4" d="M0 0h1v1h-1zM1 2h1v1h-1zM4 2h1v1h-1z"/><path fill="#a8a8a8" d="M2 0h1v1h-1zM4 0h1v1h-1zM2 2h1v1h-1z"/><path fill="#acacac" d="M5 0h1v1h-1zM5 2h1v1h-1z"/><path fill="#b0b0b0" d="M3 0h1v1h-1z"/></svg>
<svg style="left:738px;top:749px" width="156" height="18" viewBox="0 0 26 3" preserveAspectRatio="none" shape-rendering="crispEdges"><path fill="#7c7c7c" d="M7 1h1v1h-1z"/><path fill="#808080" d="M4 1h1v1h-1zM15 1h1v1h-1z"/><path fill="#848484" d="M0 1h1v1h-1zM11 1h1v1h-1zM14 1h1v1h-1zM16 1h1v1h-1zM23 1h1v1h-1z"/><path fill="#888888" d="M8 1h1v1h-1zM10 1h1v1h-1zM12 1h1v1h-1zM25 1h1v1h-1z"/><path fill="#8c8c8c" d="M20 1h1v1h-1zM22 1h1v1h-1zM24 1h1v1h-1z"/><path fill="#909090" d="M2 1h1v1h-1zM6 1h1v1h-1zM18 1h1v1h-1zM21 1h1v1h-1z"/><path fill="#949494" d="M13 1h1v1h-1zM17 1h1v1h-1zM19 1h1v1h-1z"/><path fill="#989898" d="M1 1h1v1h-1zM3 1h1v1h-1zM5 1h1v1h-1zM9 1h1v1h-1zM2 2h1v1h-1zM5 2h1v1h-1zM16 2h1v1h-1zM20 2h1v1h-1z"/><path fill="#9c9c9c" d="M1 2h1v1h-1zM7 2h1v1h-1zM13 2h1v1h-1zM21 2h2v1h-2z"/><path fill="#a0a0a0" d="M4 2h1v1h-1zM8 2h1v1h-1zM10 2h3v1h-3zM14 2h1v1h-1zM24 2h1v1h-1z"/><path fill="#a4a4a4" d="M7 0h1v1h-1zM12 0h1v1h-1zM21 0h2v1h-2zM15 2h1v1h-1zM19 2h1v1h-1zM23 2h1v1h-1z"/><path fill="#a8a8a8" d="M4 0h1v1h-1zM10 0h1v1h-1zM13 0h3v1h-3zM20 0h1v1h-1zM0 2h1v1h-1zM3 2h1v1h-1zM6 2h1v1h-1zM9 2h1v1h-1zM17 2h1v1h-1zM25 2h1v1h-1z"/><path fill="#acacac" d="M2 0h2v1h-2zM5 0h2v1h-2zM8 0h1v1h-1zM11 0h1v1h-1zM17 0h1v1h-1zM24 0h1v1h-1zM18 2h1v1h-1z"/><path fill="#b0b0b0" d="M0 0h2v1h-2zM9 0h1v1h-1zM16 0h1v1h-1zM18 0h2v1h-2zM23 0h1v1h-1zM25 0h1v1h-1z"/></svg>
<svg style="left:435px;top:793px" width="234" height="24" viewBox="0 0 39 4" preserveAspectRatio="none" shape-rendering="crispEdges"><path fill="#545454" d="M1 1h1v1h-1z"/><path fill="#606060" d="M0 1h1v1h-1zM2 1h1v1h-1z"/><path fill="#747474" d="M2 2h1v1h-1z"/><path fill="#787878" d="M1 0h1v1h-1zM29 1h1v1h-1z"/><path fill="#7c7c7c" d="M17 1h1v1h-1z"/><path fill="#848484" d="M0 0h1v1h-1zM0 2h2v1h-2z"/><path fill="#888888" d="M6 1h1v1h-1zM12 1h1v1h-1zM25 1h1v1h-1z"/><path fill="#8c8c8c" d="M5 1h1v1h-1zM10 1h1v1h-1zM23 1h1v1h-1zM30 1h1v1h-1zM33 1h2v1h-2z"/><path fill="#909090" d="M2 0h1v1h-1zM7 1h1v1h-1zM21 1h1v1h-1zM24 1h1v1h-1zM26 1h2v1h-2zM35 1h1v1h-1z"/><path fill="#949494" d="M9 1h1v1h-1zM19 1h1v1h-1z"/><path fill="#989898" d="M11 1h1v1h-1zM14 1h1v1h-1zM22 1h1v1h-1zM28 1h1v1h-1zM32 1h1v1h-1zM37 1h1v1h-1zM4 2h1v1h-1zM6 2h1v1h-1zM10 2h1v1h-1zM23 2h1v1h-1zM26 2h2v1h-2zM29 2h1v1h-1zM32 2h1v1h-1z"/><path fill="#9c9c9c" d="M4 1h1v1h-1zM16 1h1v1h-1zM36 1h1v1h-1zM12 2h1v1h-1zM15 2h2v1h-2zM21 2h2v1h-2zM24 2h1v1h-1zM28 2h1v1h-1zM31 2h1v1h-1zM34 2h1v1h-1zM36 2h1v1h-1zM38 2h1v1h-1z"/><path fill="#a0a0a0" d="M6 0h1v1h-1zM17 0h1v1h-1zM20 0h2v1h-2zM28 0h2v1h-2zM36 0h1v1h-1zM3 1h1v1h-1zM8 1h1v1h-1zM13 1h1v1h-1zM15 1h1v1h-1zM18 1h1v1h-1zM20 1h1v1h-1zM31 1h1v1h-1zM38 1h1v1h-1zM3 2h1v1h-1zM9 2h1v1h-1zM11 2h1v1h-1zM14 2h1v1h-1zM37 2h1v1h-1z"/><path fill="#a4a4a4" d="M12 0h1v1h-1zM14 0h2v1h-2zM18 0h1v1h-1zM35 0h1v1h-1zM7 2h1v1h-1zM13 2h1v1h-1zM18 2h3v1h-3zM25 2h1v1h-1zM30 2h1v1h-1zM35 2h1v1h-1zM1 3h2v1h-2z"/><path fill="#a8a8a8" d="M5 0h1v1h-1zM7 0h1v1h-1zM10 0h2v1h-2zM16 0h1v1h-1zM19 0h1v1h-1zM5 2h1v1h-1zM8 2h1v1h-1zM17 2h1v1h-1zM33 2h1v1h-1zM4 3h1v1h-1zM6 3h1v1h-1zM8 3h4v1h-4zM13 3h1v1h-1zM20 3h2v1h-2zM23 3h3v1h-3zM28 3h1v1h-1zM34 3h1v1h-1z"/><path fill="#acacac" d="M3 0h2v1h-2zM8 0h2v1h-2zM13 0h1v1h-1zM22 0h3v1h-3zM26 0h2v1h-2zM30 0h5v1h-5zM37 0h2v1h-2zM0 3h1v1h-1zM7 3h1v1h-1zM12 3h1v1h-1zM15 3h1v1h-1zM17 3h1v1h-1zM19 3h1v1h-1zM26 3h2v1h-2zM30 3h1v1h-1zM35 3h3v1h-3z"/><path fill="#b0b0b0" d="M25 0h1v1h-1zM3 3h1v1h-1zM5 3h1v1h-1zM14 3h1v1h-1zM16 3h1v1h-1zM18 3h1v1h-1zM22 3h1v1h-1zM29 3h1v1h-1zM31 3h3v1h-3zM38 3h1v1h-1z"/></svg>
<svg style="left:669px;top:795px" width="36" height="18" viewBox="0 0 6 3" preserveAspectRatio="none" shape-rendering="crispEdges"><path fill="#787878" d="M0 1h1v1h-1zM5 1h1v1h-1z"/><path fill="#7c7c7c" d="M2 1h1v1h-1z"/><path fill="#808080" d="M3 1h1v1h-1z"/><path fill="#848484" d="M1 1h1v1h-1z"/><path fill="#888888" d="M4 1h1v1h-1z"/><path fill="#989898" d="M0 2h1v1h-1zM5 2h1v1h-1z"/><path fill="#9c9c9c" d="M1 2h1v1h-1z"/><path fill="#a0a0a0" d="M4 0h1v1h-1z"/><path fill="#a4a4a4" d="M1 0h1v1h-1z"/><path fill="#a8a8a8" d="M0 0h1v1h-1zM2 0h1v1h-1zM3 2h2v1h-2z"/><path fill="#acacac" d="M3 0h1v1h-1zM5 0h1v1h-1zM2 2h1v1h-1z"/></svg>
<svg style="left:738px;top:794px" width="156" height="18" viewBox="0 0 26 3" preserveAspectRatio="none" shape-rendering="crispEdges"><path fill="#787878" d="M25 1h1v1h-1z"/><path fill="#808080" d="M3 1h1v1h-1zM6 1h2v1h-2zM9 1h1v1h-1zM13 1h1v1h-1zM16 1h1v1h-1zM19 1h3v1h-3zM23 1h1v1h-1z"/><path fill="#848484" d="M4 1h1v1h-1zM10 1h1v1h-1zM22 1h1v1h-1zM24 1h1v1h-1z"/><path fill="#888888" d="M0 1h1v1h-1zM15 1h1v1h-1z"/><path fill="#8c8c8c" d="M1 1h1v1h-1z"/><path fill="#909090" d="M8 1h1v1h-1zM12 1h1v1h-1zM14 1h1v1h-1z"/><path fill="#949494" d="M2 1h1v1h-1zM5 1h1v1h-1zM11 1h1v1h-1z"/><path fill="#989898" d="M17 1h2v1h-2zM11 2h4v1h-4zM19 2h1v1h-1zM23 2h1v1h-1z"/><path fill="#9c9c9c" d="M1 2h1v1h-1zM5 2h3v1h-3zM10 2h1v1h-1zM17 2h2v1h-2zM20 2h2v1h-2z"/><path fill="#a0a0a0" d="M3 0h1v1h-1zM17 0h1v1h-1zM19 0h1v1h-1zM24 0h1v1h-1zM0 2h1v1h-1zM2 2h1v1h-1zM22 2h1v1h-1z"/><path fill="#a4a4a4" d="M5 0h1v1h-1zM10 0h1v1h-1zM12 0h1v1h-1zM18 0h1v1h-1zM22 0h1v1h-1zM25 0h1v1h-1zM3 2h1v1h-1zM15 2h1v1h-1zM24 2h2v1h-2z"/><path fill="#a8a8a8" d="M0 0h1v1h-1zM6 0h1v1h-1zM8 0h2v1h-2zM11 0h1v1h-1zM14 0h3v1h-3zM21 0h1v1h-1zM23 0h1v1h-1zM4 2h1v1h-1zM8 2h2v1h-2zM16 2h1v1h-1z"/><path fill="#acacac" d="M2 0h1v1h-1zM20 0h1v1h-1z"/><path fill="#b0b0b0" d="M1 0h1v1h-1zM4 0h1v1h-1zM7 0h1v1h-1zM13 0h1v1h-1z"/></svg>
<svg style="left:435px;top:838px" width="234" height="24" viewBox="0 0 39 4" preserveAspectRatio="none" shape-rendering="crispEdges"><path fill="#5c5c5c" d="M1 1h1v1h-1z"/><path fill="#646464" d="M0 1h1v1h-1z"/><path fill="#686868" d="M2 1h1v1h-1z"/><path fill="#7c7c7c" d="M2 0h1v1h-1z"/><path fill="#808080" d="M0 2h1v1h-1zM2 2h1v1h-1z"/><path fill="#848484" d="M8 1h1v1h-1z"/><path fill="#888888" d="M1 0h1v1h-1zM3 1h1v1h-1zM5 1h1v1h-1zM7 1h1v1h-1zM9 1h1v1h-1zM33 1h1v1h-1zM1 2h1v1h-1z"/><path fill="#8c8c8c" d="M0 0h1v1h-1zM29 1h1v1h-1zM38 1h1v1h-1z"/><path fill="#909090" d="M12 1h1v1h-1zM17 1h1v1h-1zM27 1h1v1h-1zM36 1h1v1h-1z"/><path fill="#949494" d="M15 1h1v1h-1zM21 1h1v1h-1zM31 1h1v1h-1zM37 1h1v1h-1z"/><path fill="#989898" d="M20 1h1v1h-1zM23 1h2v1h-2zM30 1h1v1h-1zM4 2h1v1h-1zM7 2h2v1h-2zM18 2h1v1h-1zM22 2h1v1h-1zM25 2h1v1h-1zM32 2h1v1h-1zM34 2h1v1h-1z"/><path fill="#9c9c9c" d="M11 1h1v1h-1zM14 1h1v1h-1zM18 1h1v1h-1zM25 1h1v1h-1zM32 1h1v1h-1zM35 1h1v1h-1zM14 2h1v1h-1zM17 2h1v1h-1zM27 2h1v1h-1zM31 2h1v1h-1zM33 2h1v1h-1zM36 2h1v1h-1z"/><path fill="#a0a0a0" d="M4 0h2v1h-2zM10 0h1v1h-1zM12 0h1v1h-1zM14 0h2v1h-2zM20 0h1v1h-1zM23 0h1v1h-1zM27 0h2v1h-2zM4 1h1v1h-1zM6 1h1v1h-1zM10 1h1v1h-1zM13 1h1v1h-1zM16 1h1v1h-1zM19 1h1v1h-1zM22 1h1v1h-1zM26 1h1v1h-1zM28 1h1v1h-1zM34 1h1v1h-1zM3 2h1v1h-1zM5 2h1v1h-1zM12 2h1v1h-1zM15 2h1v1h-1zM19 2h1v1h-1zM23 2h2v1h-2zM26 2h1v1h-1zM38 2h1v1h-1z"/><path fill="#a4a4a4" d="M6 0h3v1h-3zM11 0h1v1h-1zM16 0h2v1h-2zM22 0h1v1h-1zM29 0h2v1h-2zM32 0h2v1h-2zM35 0h4v1h-4zM6 2h1v1h-1zM9 2h3v1h-3zM13 2h1v1h-1zM20 2h2v1h-2zM28 2h2v1h-2zM35 2h1v1h-1zM37 2h1v1h-1zM1 3h1v1h-1z"/><path fill="#a8a8a8" d="M3 0h1v1h-1zM13 0h1v1h-1zM18 0h2v1h-2zM24 0h1v1h-1zM34 0h1v1h-1zM16 2h1v1h-1zM30 2h1v1h-1zM0 3h1v1h-1zM2 3h3v1h-3zM13 3h2v1h-2zM17 3h5v1h-5zM29 3h1v1h-1zM35 3h1v1h-1z"/><path fill="#acacac" d="M21 0h1v1h-1zM25 0h2v1h-2zM5 3h1v1h-1zM7 3h4v1h-4zM15 3h1v1h-1zM22 3h1v1h-1zM25 3h1v1h-1zM27 3h1v1h-1zM34 3h1v1h-1zM36 3h1v1h-1zM38 3h1v1h-1z"/><path fill="#b0b0b0" d="M9 0h1v1h-1zM31 0h1v1h-1zM6 3h1v1h-1zM11 3h2v1h-2zM16 3h1v1h-1zM23 3h2v1h-2zM26 3h1v1h-1zM28 3h1v1h-1zM30 3h4v1h-4zM37 3h1v1h-1z"/></svg>
<svg style="left:669px;top:840px" width="36" height="18" viewBox="0 0 6 3" preserveAspectRatio="none" shape-rendering="crispEdges"><path fill="#888888" d="M0 1h1v1h-1zM2 1h1v1h-1zM5 1h1v1h-1z"/><path fill="#909090" d="M4 1h1v1h-1z"/><path fill="#949494" d="M1 1h1v1h-1zM3 1h1v1h-1z"/><path fill="#989898" d="M0 2h3v1h-3z"/><path fill="#a4a4a4" d="M0 0h1v1h-1zM4 2h2v1h-2z"/><path fill="#a8a8a8" d="M4 0h2v1h-2zM3 2h1v1h-1z"/><path fill="#acacac" d="M2 0h1v1h-1z"/><path fill="#b0b0b0" d="M1 0h1v1h-1zM3 0h1v1h-1z"/></svg>
<svg style="left:738px;top:839px" width="156" height="18" viewBox="0 0 26 3" preserveAspectRatio="none" shape-rendering="crispEdges"><path fill="#787878" d="M6 1h1v1h-1zM23 1h1v1h-1z"/><path fill="#7c7c7c" d="M3 1h1v1h-1zM9 1h1v1h-1z"/><path fill="#808080" d="M12 1h1v1h-1zM22 1h1v1h-1z"/><path fill="#848484" d="M5 1h1v1h-1zM14 1h1v1h-1zM19 1h1v1h-1z"/><path fill="#888888" d="M1 1h1v1h-1zM4 1h1v1h-1zM10 1h2v1h-2zM17 1h1v1h-1z"/><path fill="#8c8c8c" d="M15 1h1v1h-1z"/><path fill="#909090" d="M2 1h1v1h-1zM8 1h1v1h-1zM16 1h1v1h-1zM20 1h1v1h-1zM25 1h1v1h-1z"/><path fill="#949494" d="M0 1h1v1h-1zM7 1h1v1h-1zM18 1h1v1h-1zM24 1h1v1h-1z"/><path fill="#989898" d="M13 1h1v1h-1zM21 1h1v1h-1zM1 2h1v1h-1zM9 2h1v1h-1zM12 2h2v1h-2zM22 2h1v1h-1zM24 2h1v1h-1z"/><path fill="#9c9c9c" d="M21 2h1v1h-1z"/><path fill="#a0a0a0" d="M4 0h1v1h-1zM8 0h1v1h-1zM13 0h1v1h-1zM19 0h1v1h-1zM2 2h1v1h-1zM4 2h1v1h-1zM7 2h1v1h-1zM10 2h1v1h-1zM16 2h2v1h-2zM19 2h2v1h-2z"/><path fill="#a4a4a4" d="M2 0h1v1h-1zM7 0h1v1h-1zM10 0h1v1h-1zM15 0h1v1h-1zM22 0h1v1h-1zM0 2h1v1h-1zM3 2h1v1h-1zM5 2h1v1h-1zM11 2h1v1h-1z"/><path fill="#a8a8a8" d="M0 0h1v1h-1zM9 0h1v1h-1zM11 0h1v1h-1zM16 0h3v1h-3zM6 2h1v1h-1zM14 2h2v1h-2zM18 2h1v1h-1zM23 2h1v1h-1zM25 2h1v1h-1z"/><path fill="#acacac" d="M5 0h1v1h-1zM14 0h1v1h-1zM20 0h2v1h-2zM23 0h1v1h-1zM25 0h1v1h-1zM8 2h1v1h-1z"/><path fill="#b0b0b0" d="M1 0h1v1h-1zM3 0h1v1h-1zM6 0h1v1h-1zM12 0h1v1h-1zM24 0h1v1h-1z"/></svg>
<svg style="left:435px;top:883px" width="234" height="24" viewBox="0 0 39 4" preserveAspectRatio="none" shape-rendering="crispEdges"><path fill="#505050" d="M2 1h1v1h-1z"/><path fill="#545454" d="M0 1h1v1h-1z"/><path fill="#585858" d="M1 1h1v1h-1z"/><path fill="#747474" d="M31 1h1v1h-1zM0 2h1v1h-1z"/><path fill="#7c7c7c" d="M20 1h1v1h-1z"/><path fill="#808080" d="M15 1h1v1h-1zM22 1h1v1h-1zM1 2h1v1h-1z"/><path fill="#848484" d="M1 0h1v1h-1zM2 2h1v1h-1z"/><path fill="#888888" d="M16 1h1v1h-1zM32 1h1v1h-1zM34 1h1v1h-1z"/><path fill="#8c8c8c" d="M0 0h1v1h-1zM12 1h1v1h-1zM19 1h1v1h-1zM27 1h1v1h-1z"/><path fill="#909090" d="M2 0h1v1h-1zM5 1h1v1h-1zM8 1h1v1h-1zM13 1h1v1h-1zM17 1h1v1h-1zM26 1h1v1h-1zM29 1h1v1h-1zM33 1h1v1h-1zM35 1h1v1h-1z"/><path fill="#949494" d="M7 1h1v1h-1zM18 1h1v1h-1zM24 1h1v1h-1zM37 1h1v1h-1z"/><path fill="#989898" d="M11 1h1v1h-1zM21 1h1v1h-1zM36 1h1v1h-1zM38 1h1v1h-1zM5 2h1v1h-1zM15 2h1v1h-1zM20 2h1v1h-1zM22 2h1v1h-1zM30 2h3v1h-3zM36 2h1v1h-1z"/><path fill="#9c9c9c" d="M3 1h2v1h-2zM6 1h1v1h-1zM25 1h1v1h-1zM8 2h1v1h-1zM12 2h1v1h-1zM14 2h1v1h-1zM17 2h1v1h-1zM19 2h1v1h-1zM24 2h2v1h-2zM27 2h1v1h-1zM34 2h1v1h-1z"/><path fill="#a0a0a0" d="M3 0h1v1h-1zM7 0h1v1h-1zM24 0h1v1h-1zM26 0h1v1h-1zM28 0h1v1h-1zM9 1h2v1h-2zM23 1h1v1h-1zM28 1h1v1h-1zM30 1h1v1h-1zM3 2h2v1h-2zM13 2h1v1h-1zM18 2h1v1h-1zM26 2h1v1h-1zM29 2h1v1h-1zM33 2h1v1h-1zM38 2h1v1h-1z"/><path fill="#a4a4a4" d="M5 0h2v1h-2zM16 0h2v1h-2zM21 0h2v1h-2zM29 0h1v1h-1zM32 0h1v1h-1zM34 0h4v1h-4zM14 1h1v1h-1zM6 2h1v1h-1zM9 2h3v1h-3zM16 2h1v1h-1zM23 2h1v1h-1zM35 2h1v1h-1z"/><path fill="#a8a8a8" d="M4 0h1v1h-1zM10 0h1v1h-1zM14 0h2v1h-2zM20 0h1v1h-1zM23 0h1v1h-1zM33 0h1v1h-1zM7 2h1v1h-1zM21 2h1v1h-1zM28 2h1v1h-1zM37 2h1v1h-1zM1 3h1v1h-1zM3 3h1v1h-1zM9 3h2v1h-2zM12 3h1v1h-1zM16 3h1v1h-1zM19 3h1v1h-1zM21 3h2v1h-2zM26 3h1v1h-1zM30 3h2v1h-2zM37 3h1v1h-1z"/><path fill="#acacac" d="M8 0h2v1h-2zM11 0h3v1h-3zM19 0h1v1h-1zM25 0h1v1h-1zM30 0h2v1h-2zM0 3h1v1h-1zM2 3h1v1h-1zM6 3h3v1h-3zM14 3h2v1h-2zM18 3h1v1h-1zM20 3h1v1h-1zM23 3h3v1h-3zM27 3h3v1h-3zM34 3h1v1h-1zM36 3h1v1h-1zM38 3h1v1h-1z"/><path fill="#b0b0b0" d="M18 0h1v1h-1zM27 0h1v1h-1zM38 0h1v1h-1zM4 3h2v1h-2zM11 3h1v1h-1zM13 3h1v1h-1zM17 3h1v1h-1zM32 3h2v1h-2zM35 3h1v1h-1z"/></svg>
<svg style="left:669px;top:885px" width="36" height="18" viewBox="0 0 6 3" preserveAspectRatio="none" shape-rendering="crispEdges"><path fill="#707070" d="M2 1h1v1h-1z"/><path fill="#7c7c7c" d="M1 1h1v1h-1zM5 1h1v1h-1z"/><path fill="#848484" d="M3 1h1v1h-1z"/><path fill="#8c8c8c" d="M4 1h1v1h-1z"/><path fill="#949494" d="M0 1h1v1h-1z"/><path fill="#989898" d="M0 2h1v1h-1zM2 2h1v1h-1z"/><path fill="#9c9c9c" d="M3 2h1v1h-1z"/><path fill="#a0a0a0" d="M1 0h1v1h-1z"/><path fill="#a4a4a4" d="M1 2h1v1h-1z"/><path fill="#a8a8a8" d="M0 0h1v1h-1zM2 0h2v1h-2zM4 2h2v1h-2z"/><path fill="#acacac" d="M5 0h1v1h-1z"/><path fill="#b0b0b0" d="M4 0h1v1h-1z"/></svg>
<svg style="left:738px;top:884px" width="156" height="18" viewBox="0 0 26 3" preserveAspectRatio="none" shape-rendering="crispEdges"><path fill="#707070" d="M24 1h1v1h-1z"/><path fill="#747474" d="M8 1h1v1h-1z"/><path fill="#7c7c7c" d="M9 1h2v1h-2zM12 1h1v1h-1z"/><path fill="#808080" d="M2 1h1v1h-1zM4 1h1v1h-1zM15 1h1v1h-1zM17 1h1v1h-1zM19 1h1v1h-1z"/><path fill="#848484" d="M6 1h1v1h-1zM11 1h1v1h-1z"/><path fill="#888888" d="M14 1h1v1h-1z"/><path fill="#8c8c8c" d="M1 1h1v1h-1zM16 1h1v1h-1zM20 1h3v1h-3zM25 1h1v1h-1z"/><path fill="#909090" d="M0 1h1v1h-1zM13 1h1v1h-1z"/><path fill="#949494" d="M3 1h1v1h-1zM5 1h1v1h-1zM7 1h1v1h-1z"/><path fill="#989898" d="M18 1h1v1h-1zM23 1h1v1h-1zM0 2h1v1h-1zM7 2h2v1h-2zM14 2h1v1h-1zM17 2h1v1h-1zM22 2h1v1h-1z"/><path fill="#9c9c9c" d="M16 2h1v1h-1zM18 2h1v1h-1zM21 2h1v1h-1zM24 2h1v1h-1z"/><path fill="#a0a0a0" d="M6 0h1v1h-1zM19 0h1v1h-1zM11 2h1v1h-1z"/><path fill="#a4a4a4" d="M0 0h1v1h-1zM11 0h3v1h-3zM18 0h1v1h-1zM21 0h1v1h-1zM12 2h2v1h-2zM20 2h1v1h-1zM25 2h1v1h-1z"/><path fill="#a8a8a8" d="M5 0h1v1h-1zM7 0h2v1h-2zM14 0h1v1h-1zM23 0h1v1h-1zM1 2h6v1h-6zM9 2h2v1h-2zM15 2h1v1h-1zM19 2h1v1h-1z"/><path fill="#acacac" d="M1 0h2v1h-2zM9 0h2v1h-2zM22 0h1v1h-1zM23 2h1v1h-1z"/><path fill="#b0b0b0" d="M3 0h2v1h-2zM15 0h3v1h-3zM20 0h1v1h-1zM24 0h2v1h-2z"/></svg>
<svg style="left:435px;top:928px" width="234" height="24" viewBox="0 0 39 4" preserveAspectRatio="none" shape-rendering="crispEdges"><path fill="#585858" d="M1 1h1v1h-1z"/><path fill="#606060" d="M0 1h1v1h-1z"/><path fill="#686868" d="M2 1h1v1h-1z"/><path fill="#707070" d="M22 1h1v1h-1z"/><path fill="#747474" d="M19 1h1v1h-1z"/><path fill="#787878" d="M20 1h1v1h-1z"/><path fill="#7c7c7c" d="M0 0h1v1h-1zM2 0h1v1h-1zM0 2h1v1h-1zM2 2h1v1h-1z"/><path fill="#808080" d="M24 1h1v1h-1z"/><path fill="#888888" d="M5 1h2v1h-2zM13 1h2v1h-2zM31 1h1v1h-1zM38 1h1v1h-1zM1 2h1v1h-1z"/><path fill="#8c8c8c" d="M1 0h1v1h-1zM3 1h1v1h-1zM7 1h1v1h-1zM18 1h1v1h-1zM25 1h1v1h-1zM29 1h1v1h-1zM33 1h1v1h-1zM37 1h1v1h-1z"/><path fill="#909090" d="M4 1h1v1h-1zM12 1h1v1h-1zM36 1h1v1h-1z"/><path fill="#949494" d="M9 1h1v1h-1zM21 1h1v1h-1zM23 1h1v1h-1zM26 1h1v1h-1zM32 1h1v1h-1z"/><path fill="#989898" d="M15 1h1v1h-1zM27 1h1v1h-1zM34 1h1v1h-1zM5 2h2v1h-2zM9 2h3v1h-3zM13 2h2v1h-2zM16 2h1v1h-1zM19 2h1v1h-1zM25 2h1v1h-1zM32 2h1v1h-1zM37 2h1v1h-1z"/><path fill="#9c9c9c" d="M8 1h1v1h-1zM28 1h1v1h-1zM35 1h1v1h-1zM4 2h1v1h-1zM17 2h1v1h-1zM24 2h1v1h-1zM30 2h1v1h-1zM36 2h1v1h-1z"/><path fill="#a0a0a0" d="M5 0h2v1h-2zM8 0h2v1h-2zM19 0h5v1h-5zM30 0h4v1h-4zM36 0h1v1h-1zM10 1h2v1h-2zM16 1h2v1h-2zM30 1h1v1h-1zM8 2h1v1h-1zM15 2h1v1h-1zM22 2h1v1h-1zM26 2h2v1h-2zM34 2h2v1h-2z"/><path fill="#a4a4a4" d="M7 0h1v1h-1zM15 0h1v1h-1zM18 0h1v1h-1zM24 0h1v1h-1zM29 0h1v1h-1zM34 0h1v1h-1zM37 0h1v1h-1zM7 2h1v1h-1zM20 2h1v1h-1zM23 2h1v1h-1zM28 2h2v1h-2zM31 2h1v1h-1zM33 2h1v1h-1zM38 2h1v1h-1zM1 3h2v1h-2z"/><path fill="#a8a8a8" d="M4 0h1v1h-1zM10 0h5v1h-5zM17 0h1v1h-1zM38 0h1v1h-1zM3 2h1v1h-1zM12 2h1v1h-1zM18 2h1v1h-1zM21 2h1v1h-1zM3 3h1v1h-1zM9 3h5v1h-5zM20 3h3v1h-3zM24 3h2v1h-2zM29 3h1v1h-1zM32 3h3v1h-3zM36 3h1v1h-1zM38 3h1v1h-1z"/><path fill="#acacac" d="M16 0h1v1h-1zM26 0h3v1h-3zM35 0h1v1h-1zM4 3h1v1h-1zM6 3h2v1h-2zM17 3h1v1h-1zM19 3h1v1h-1zM23 3h1v1h-1zM26 3h2v1h-2zM35 3h1v1h-1zM37 3h1v1h-1z"/><path fill="#b0b0b0" d="M3 0h1v1h-1zM25 0h1v1h-1zM0 3h1v1h-1zM5 3h1v1h-1zM8 3h1v1h-1zM14 3h3v1h-3zM18 3h1v1h-1zM28 3h1v1h-1zM30 3h2v1h-2z"/></svg>
<svg style="left:669px;top:930px" width="36" height="18" viewBox="0 0 6 3" preserveAspectRatio="none" shape-rendering="crispEdges"><path fill="#7c7c7c" d="M3 1h1v1h-1z"/><path fill="#848484" d="M4 1h2v1h-2z"/><path fill="#888888" d="M0 1h1v1h-1z"/><path fill="#8c8c8c" d="M1 1h1v1h-1z"/><path fill="#989898" d="M2 1h1v1h-1z"/><path fill="#9c9c9c" d="M2 2h1v1h-1z"/><path fill="#a0a0a0" d="M1 2h1v1h-1zM5 2h1v1h-1z"/><path fill="#a4a4a4" d="M2 0h2v1h-2zM0 2h1v1h-1zM4 2h1v1h-1z"/><path fill="#a8a8a8" d="M5 0h1v1h-1z"/><path fill="#acacac" d="M0 0h2v1h-2zM4 0h1v1h-1zM3 2h1v1h-1z"/></svg>
<svg style="left:738px;top:929px" width="156" height="18" viewBox="0 0 26 3" preserveAspectRatio="none" shape-rendering="crispEdges"><path fill="#787878" d="M0 1h1v1h-1z"/><path fill="#7c7c7c" d="M7 1h1v1h-1zM14 1h1v1h-1z"/><path fill="#808080" d="M3 1h1v1h-1zM8 1h2v1h-2zM11 1h1v1h-1zM18 1h1v1h-1zM20 1h1v1h-1z"/><path fill="#848484" d="M16 1h1v1h-1zM24 1h2v1h-2z"/><path fill="#888888" d="M2 1h1v1h-1zM10 1h1v1h-1z"/><path fill="#8c8c8c" d="M1 1h1v1h-1zM4 1h1v1h-1zM12 1h2v1h-2zM19 1h1v1h-1zM22 1h1v1h-1z"/><path fill="#909090" d="M5 1h1v1h-1zM15 1h1v1h-1zM21 1h1v1h-1zM23 1h1v1h-1z"/><path fill="#949494" d="M17 1h1v1h-1z"/><path fill="#989898" d="M6 1h1v1h-1zM7 2h1v1h-1zM12 2h1v1h-1zM15 2h1v1h-1zM18 2h1v1h-1z"/><path fill="#9c9c9c" d="M1 2h1v1h-1zM4 2h1v1h-1zM10 2h2v1h-2zM17 2h1v1h-1zM21 2h2v1h-2z"/><path fill="#a0a0a0" d="M0 0h2v1h-2zM7 0h1v1h-1zM24 0h1v1h-1zM3 2h1v1h-1zM6 2h1v1h-1zM8 2h1v1h-1zM19 2h1v1h-1zM23 2h2v1h-2z"/><path fill="#a4a4a4" d="M2 0h1v1h-1zM11 0h2v1h-2zM15 0h1v1h-1zM17 0h1v1h-1zM20 0h1v1h-1zM25 0h1v1h-1zM5 2h1v1h-1zM14 2h1v1h-1zM16 2h1v1h-1zM20 2h1v1h-1z"/><path fill="#a8a8a8" d="M5 0h2v1h-2zM21 0h1v1h-1zM0 2h1v1h-1zM13 2h1v1h-1zM25 2h1v1h-1z"/><path fill="#acacac" d="M3 0h2v1h-2zM16 0h1v1h-1zM22 0h1v1h-1zM2 2h1v1h-1zM9 2h1v1h-1z"/><path fill="#b0b0b0" d="M8 0h3v1h-3zM13 0h2v1h-2zM18 0h2v1h-2zM23 0h1v1h-1z"/></svg>


<!-- ============ DRAWER ============ -->
<div class="a" style="left:898px;top:0;width:1018px;height:967px;background:#fff"></div>
<div class="t b" style="left:915px;top:20.91px;font-size:17px;color:#111;letter-spacing:-0.2px;">Message Details</div>
<svg style="left:0;top:0" width="1" height="1"><g stroke="#666" stroke-width="2.2" stroke-linecap="round"><line x1="1883.3" y1="24.3" x2="1892.7" y2="33.7"/><line x1="1892.7" y1="24.3" x2="1883.3" y2="33.7"/></g></svg>
<div class="a" style="left:898px;top:59px;width:1018px;height:1px;background:#e0e0e0"></div>
<div class="a" style="left:922px;top:84px;width:388px;height:40px;border:1px solid #8f8f8f;border-radius:8px"></div>
<div class="t" style="left:938px;top:97.85px;font-size:14px;color:#2f63bd;">Received View (Sender) - </div>
<div class="a" style="left:1103px;top:120px;width:200px;height:6px;background:#e0e0e0"></div>
<div class="t b" style="left:1733px;top:97.90px;font-size:15px;color:#111;letter-spacing:-0.22px;">87 of 200</div>
<div class="a" style="left:1811px;top:84px;width:67px;height:44px;border:1px solid #d9d9d9;border-radius:4px"></div>
<div class="a" style="left:1843px;top:85px;width:1px;height:42px;background:#d9d9d9"></div>
<svg style="left:0;top:0" width="1" height="1"><g fill="none" stroke="#222" stroke-width="1.6"><path d="M1830 101.5 L1825 106.5 L1830 111.5"/><path d="M1858 101.5 L1863 106.5 L1858 111.5"/></g></svg>
<div class="t" id="kw" style="left:1035px;top:198.11px;font-size:17px;color:#1a1a1a;">Keywords</div>
<div class="t b" id="analysis" style="left:1031px;top:249.90px;font-size:15px;color:#666;letter-spacing:-0.2px;">Analysis</div>
<div class="t b" style="left:1123px;top:249.90px;font-size:15px;color:#666;letter-spacing:-0.2px;">Header</div>
<div class="t b" style="left:1209px;top:249.90px;font-size:15px;color:#666;letter-spacing:-0.01px;">Transmission Data</div>
<div class="t b" style="left:1371px;top:249.90px;font-size:15px;color:#666;letter-spacing:-0.34px;">Policies</div>
<svg style="left:0;top:0" width="1" height="1"><path d="M1866.5 317.5 L1873 311 L1879.5 317.5" fill="none" stroke="#666" stroke-width="2"/></svg>
<div class="t b" style="left:938px;top:352.30px;font-size:15px;color:#1a1a1a;letter-spacing:-0.18px;">From (Envelope)</div>
<div class="t b" style="left:938px;top:380.10px;font-size:15px;color:#1a1a1a;letter-spacing:-0.12px;">From (Header)</div>
<div class="t b" style="left:938px;top:407.90px;font-size:15px;color:#1a1a1a;">To</div>
<div class="t b" style="left:938px;top:439.90px;font-size:15px;color:#1a1a1a;">Subject</div>
<div class="t b" style="left:938px;top:468.20px;font-size:15px;color:#1a1a1a;">Sent</div>
<div class="t b" style="left:1133px;top:352.30px;font-size:15px;color:#1a1a1a;letter-spacing:0.29px;">Microsoft Outlook</div>
<div class="t b" style="left:1133px;top:380.10px;font-size:15px;color:#1a1a1a;letter-spacing:0.29px;">Microsoft Outlook</div>
<div class="t" style="left:1133px;top:440.30px;font-size:15px;color:#222;letter-spacing:-0.2px;">Undeliverable:</div>
<div class="t" style="left:1133px;top:468.60px;font-size:15px;color:#222;letter-spacing:-0.41px;">01 Aug 2025 - 12:19:49</div>
<svg style="left:1260px;top:348px" width="576" height="24" viewBox="0 0 96 4" preserveAspectRatio="none" shape-rendering="crispEdges"><path fill="#b4b4b4" d="M6 1h1v1h-1zM11 1h1v1h-1zM24 1h1v1h-1zM57 1h1v1h-1zM60 1h1v1h-1zM89 1h1v1h-1zM95 1h1v1h-1z"/><path fill="#b8b8b8" d="M5 1h1v1h-1zM17 1h3v1h-3zM55 1h1v1h-1zM58 1h2v1h-2zM76 1h1v1h-1zM84 1h1v1h-1zM90 1h1v1h-1z"/><path fill="#bcbcbc" d="M0 1h1v1h-1zM7 1h1v1h-1zM30 1h1v1h-1zM34 1h1v1h-1zM36 1h1v1h-1zM38 1h1v1h-1zM46 1h1v1h-1zM74 1h1v1h-1zM77 1h1v1h-1z"/><path fill="#c0c0c0" d="M8 1h1v1h-1zM20 1h1v1h-1zM23 1h1v1h-1zM40 1h1v1h-1zM43 1h1v1h-1zM45 1h1v1h-1zM50 1h1v1h-1zM63 1h1v1h-1zM78 1h1v1h-1zM86 1h2v1h-2zM94 1h1v1h-1z"/><path fill="#c4c4c4" d="M10 1h1v1h-1zM15 1h1v1h-1zM39 1h1v1h-1zM62 1h1v1h-1zM67 1h1v1h-1zM72 1h1v1h-1zM85 1h1v1h-1zM91 1h1v1h-1z"/><path fill="#c8c8c8" d="M14 1h1v1h-1zM26 1h2v1h-2z"/><path fill="#cccccc" d="M1 1h1v1h-1zM16 1h1v1h-1zM35 1h1v1h-1zM52 1h1v1h-1zM56 1h1v1h-1zM66 1h1v1h-1zM68 1h1v1h-1zM92 1h1v1h-1zM0 2h1v1h-1zM14 2h2v1h-2zM19 2h2v1h-2zM32 2h1v1h-1zM40 2h1v1h-1zM43 2h1v1h-1zM46 2h1v1h-1zM62 2h1v1h-1zM66 2h1v1h-1zM72 2h1v1h-1z"/><path fill="#d0d0d0" d="M9 1h1v1h-1zM29 1h1v1h-1zM32 1h1v1h-1zM53 1h1v1h-1zM71 1h1v1h-1zM79 1h1v1h-1zM93 1h1v1h-1zM7 2h1v1h-1zM21 2h1v1h-1zM23 2h1v1h-1zM27 2h2v1h-2zM36 2h1v1h-1zM38 2h1v1h-1zM47 2h4v1h-4zM59 2h1v1h-1zM64 2h1v1h-1zM68 2h1v1h-1z"/><path fill="#d4d4d4" d="M49 1h1v1h-1zM61 1h1v1h-1zM73 1h1v1h-1zM80 1h1v1h-1zM1 2h1v1h-1zM6 2h1v1h-1zM9 2h1v1h-1zM13 2h1v1h-1zM26 2h1v1h-1zM33 2h1v1h-1zM75 2h1v1h-1zM78 2h1v1h-1zM94 2h2v1h-2z"/><path fill="#d8d8d8" d="M2 1h1v1h-1zM4 1h1v1h-1zM13 1h1v1h-1zM21 1h1v1h-1zM25 1h1v1h-1zM28 1h1v1h-1zM31 1h1v1h-1zM33 1h1v1h-1zM42 1h1v1h-1zM54 1h1v1h-1zM70 1h1v1h-1zM82 1h2v1h-2zM67 2h1v1h-1zM76 2h1v1h-1zM82 2h1v1h-1zM86 2h1v1h-1zM88 2h2v1h-2zM91 2h1v1h-1zM93 2h1v1h-1z"/><path fill="#dcdcdc" d="M3 1h1v1h-1zM22 1h1v1h-1zM37 1h1v1h-1zM48 1h1v1h-1zM51 1h1v1h-1zM81 1h1v1h-1zM2 2h1v1h-1zM18 2h1v1h-1zM24 2h1v1h-1zM51 2h1v1h-1zM63 2h1v1h-1zM71 2h1v1h-1zM74 2h1v1h-1zM85 2h1v1h-1z"/><path fill="#e0e0e0" d="M44 1h1v1h-1zM47 1h1v1h-1zM64 1h2v1h-2zM75 1h1v1h-1zM88 1h1v1h-1zM3 2h1v1h-1zM8 2h1v1h-1zM11 2h1v1h-1zM17 2h1v1h-1zM25 2h1v1h-1zM31 2h1v1h-1zM34 2h2v1h-2zM53 2h1v1h-1zM73 2h1v1h-1zM79 2h1v1h-1zM83 2h1v1h-1zM92 2h1v1h-1z"/><path fill="#e4e4e4" d="M12 1h1v1h-1zM39 2h1v1h-1zM44 2h2v1h-2zM52 2h1v1h-1zM54 2h1v1h-1zM84 2h1v1h-1zM87 2h1v1h-1zM90 2h1v1h-1z"/><path fill="#e8e8e8" d="M41 1h1v1h-1zM69 1h1v1h-1zM10 2h1v1h-1zM16 2h1v1h-1zM22 2h1v1h-1zM29 2h1v1h-1zM37 2h1v1h-1zM41 2h1v1h-1zM55 2h3v1h-3zM65 2h1v1h-1zM69 2h2v1h-2zM80 2h2v1h-2z"/><path fill="#ececec" d="M9 0h1v1h-1zM13 0h2v1h-2zM18 0h1v1h-1zM20 0h3v1h-3zM25 0h1v1h-1zM34 0h2v1h-2zM39 0h1v1h-1zM45 0h3v1h-3zM49 0h1v1h-1zM52 0h3v1h-3zM57 0h1v1h-1zM62 0h1v1h-1zM66 0h1v1h-1zM69 0h1v1h-1zM71 0h1v1h-1zM74 0h3v1h-3zM87 0h1v1h-1zM91 0h1v1h-1zM94 0h1v1h-1zM4 2h1v1h-1zM12 2h1v1h-1zM30 2h1v1h-1zM58 2h1v1h-1zM60 2h2v1h-2zM77 2h1v1h-1z"/><path fill="#f0f0f0" d="M4 0h2v1h-2zM8 0h1v1h-1zM12 0h1v1h-1zM17 0h1v1h-1zM23 0h2v1h-2zM29 0h1v1h-1zM31 0h1v1h-1zM42 0h1v1h-1zM55 0h2v1h-2zM63 0h1v1h-1zM72 0h2v1h-2zM79 0h2v1h-2zM83 0h2v1h-2zM90 0h1v1h-1zM95 0h1v1h-1zM5 2h1v1h-1zM42 2h1v1h-1zM4 3h1v1h-1zM6 3h1v1h-1zM9 3h2v1h-2zM14 3h1v1h-1zM29 3h1v1h-1zM31 3h1v1h-1zM35 3h1v1h-1zM45 3h1v1h-1zM47 3h1v1h-1zM50 3h2v1h-2zM55 3h1v1h-1zM57 3h1v1h-1zM59 3h1v1h-1zM61 3h1v1h-1zM63 3h1v1h-1zM70 3h1v1h-1zM72 3h2v1h-2zM77 3h1v1h-1zM79 3h1v1h-1zM84 3h3v1h-3z"/><path fill="#f4f4f4" d="M11 0h1v1h-1zM27 0h1v1h-1zM32 0h1v1h-1zM37 0h1v1h-1zM40 0h2v1h-2zM44 0h1v1h-1zM50 0h1v1h-1zM64 0h2v1h-2zM67 0h2v1h-2zM92 0h2v1h-2zM0 3h2v1h-2zM7 3h1v1h-1zM11 3h3v1h-3zM16 3h2v1h-2zM20 3h1v1h-1zM22 3h1v1h-1zM27 3h2v1h-2zM32 3h1v1h-1zM38 3h1v1h-1zM40 3h2v1h-2zM48 3h2v1h-2zM54 3h1v1h-1zM62 3h1v1h-1zM69 3h1v1h-1zM75 3h2v1h-2zM81 3h1v1h-1zM87 3h1v1h-1zM89 3h1v1h-1z"/><path fill="#f8f8f8" d="M0 0h3v1h-3zM7 0h1v1h-1zM10 0h1v1h-1zM15 0h2v1h-2zM26 0h1v1h-1zM28 0h1v1h-1zM33 0h1v1h-1zM36 0h1v1h-1zM38 0h1v1h-1zM48 0h1v1h-1zM51 0h1v1h-1zM58 0h4v1h-4zM70 0h1v1h-1zM77 0h2v1h-2zM81 0h1v1h-1zM85 0h2v1h-2zM88 0h2v1h-2zM5 3h1v1h-1zM18 3h2v1h-2zM21 3h1v1h-1zM23 3h1v1h-1zM26 3h1v1h-1zM34 3h1v1h-1zM36 3h2v1h-2zM39 3h1v1h-1zM42 3h1v1h-1zM44 3h1v1h-1zM46 3h1v1h-1zM60 3h1v1h-1zM64 3h4v1h-4zM71 3h1v1h-1zM78 3h1v1h-1zM82 3h2v1h-2zM90 3h5v1h-5z"/><path fill="#fcfcfc" d="M3 0h1v1h-1zM6 0h1v1h-1zM19 0h1v1h-1zM30 0h1v1h-1zM43 0h1v1h-1zM82 0h1v1h-1zM2 3h2v1h-2zM8 3h1v1h-1zM15 3h1v1h-1zM24 3h2v1h-2zM30 3h1v1h-1zM33 3h1v1h-1zM43 3h1v1h-1zM52 3h2v1h-2zM56 3h1v1h-1zM58 3h1v1h-1zM68 3h1v1h-1zM74 3h1v1h-1zM80 3h1v1h-1zM88 3h1v1h-1zM95 3h1v1h-1z"/></svg>
<svg style="left:1260px;top:377px" width="576" height="24" viewBox="0 0 96 4" preserveAspectRatio="none" shape-rendering="crispEdges"><path fill="#b4b4b4" d="M3 1h1v1h-1zM8 1h2v1h-2zM13 1h1v1h-1zM35 1h1v1h-1zM88 1h1v1h-1z"/><path fill="#b8b8b8" d="M22 1h1v1h-1zM26 1h1v1h-1zM68 1h1v1h-1zM73 1h1v1h-1zM76 1h1v1h-1zM89 1h1v1h-1z"/><path fill="#bcbcbc" d="M5 1h1v1h-1zM11 1h1v1h-1zM42 1h1v1h-1zM54 1h1v1h-1zM60 1h1v1h-1zM69 1h1v1h-1zM71 1h1v1h-1zM82 1h1v1h-1z"/><path fill="#c0c0c0" d="M0 1h1v1h-1zM10 1h1v1h-1zM12 1h1v1h-1zM19 1h1v1h-1zM31 1h1v1h-1zM44 1h1v1h-1zM48 1h1v1h-1zM50 1h1v1h-1zM55 1h1v1h-1zM64 1h2v1h-2zM67 1h1v1h-1zM70 1h1v1h-1zM83 1h1v1h-1zM90 1h1v1h-1z"/><path fill="#c4c4c4" d="M4 1h1v1h-1zM15 1h1v1h-1zM29 1h1v1h-1zM74 1h1v1h-1z"/><path fill="#c8c8c8" d="M16 1h1v1h-1zM18 1h1v1h-1zM59 1h1v1h-1zM61 1h1v1h-1zM63 1h1v1h-1zM93 1h1v1h-1zM95 1h1v1h-1z"/><path fill="#cccccc" d="M1 1h1v1h-1zM34 1h1v1h-1zM36 1h1v1h-1zM38 1h1v1h-1zM75 1h1v1h-1zM77 1h2v1h-2zM84 1h1v1h-1zM8 2h2v1h-2zM23 2h1v1h-1zM37 2h2v1h-2zM50 2h1v1h-1zM77 2h1v1h-1zM79 2h1v1h-1z"/><path fill="#d0d0d0" d="M21 1h1v1h-1zM23 1h1v1h-1zM0 2h1v1h-1zM5 2h1v1h-1zM7 2h1v1h-1zM17 2h1v1h-1zM22 2h1v1h-1zM26 2h2v1h-2zM48 2h1v1h-1zM52 2h1v1h-1zM60 2h1v1h-1zM72 2h1v1h-1zM76 2h1v1h-1zM89 2h1v1h-1zM94 2h1v1h-1z"/><path fill="#d4d4d4" d="M27 1h1v1h-1zM33 1h1v1h-1zM40 1h1v1h-1zM43 1h1v1h-1zM46 1h1v1h-1zM49 1h1v1h-1zM51 1h1v1h-1zM79 1h1v1h-1zM14 2h1v1h-1zM16 2h1v1h-1zM19 2h2v1h-2zM24 2h1v1h-1zM40 2h1v1h-1zM47 2h1v1h-1zM61 2h1v1h-1zM63 2h1v1h-1zM68 2h1v1h-1zM71 2h1v1h-1zM87 2h1v1h-1z"/><path fill="#d8d8d8" d="M2 1h1v1h-1zM20 1h1v1h-1zM25 1h1v1h-1zM28 1h1v1h-1zM41 1h1v1h-1zM52 1h2v1h-2zM62 1h1v1h-1zM91 1h1v1h-1zM4 2h1v1h-1zM15 2h1v1h-1zM18 2h1v1h-1zM35 2h1v1h-1zM39 2h1v1h-1zM46 2h1v1h-1zM55 2h1v1h-1zM70 2h1v1h-1zM80 2h1v1h-1zM84 2h1v1h-1zM93 2h1v1h-1z"/><path fill="#dcdcdc" d="M14 1h1v1h-1zM37 1h1v1h-1zM45 1h1v1h-1zM47 1h1v1h-1zM57 1h1v1h-1zM85 1h2v1h-2zM92 1h1v1h-1zM21 2h1v1h-1zM58 2h2v1h-2zM74 2h1v1h-1zM81 2h2v1h-2z"/><path fill="#e0e0e0" d="M6 1h1v1h-1zM17 1h1v1h-1zM24 1h1v1h-1zM30 1h1v1h-1zM32 1h1v1h-1zM56 1h1v1h-1zM72 1h1v1h-1zM81 1h1v1h-1zM2 2h1v1h-1zM28 2h1v1h-1zM33 2h1v1h-1zM36 2h1v1h-1zM43 2h2v1h-2zM51 2h1v1h-1zM57 2h1v1h-1zM64 2h1v1h-1zM66 2h1v1h-1zM73 2h1v1h-1zM78 2h1v1h-1zM83 2h1v1h-1z"/><path fill="#e4e4e4" d="M7 1h1v1h-1zM58 1h1v1h-1zM66 1h1v1h-1zM80 1h1v1h-1zM87 1h1v1h-1zM29 2h1v1h-1zM31 2h1v1h-1zM34 2h1v1h-1zM41 2h1v1h-1zM45 2h1v1h-1zM53 2h1v1h-1zM62 2h1v1h-1zM67 2h1v1h-1zM69 2h1v1h-1zM85 2h1v1h-1zM90 2h1v1h-1zM95 2h1v1h-1z"/><path fill="#e8e8e8" d="M39 1h1v1h-1zM94 1h1v1h-1zM6 2h1v1h-1zM13 2h1v1h-1zM25 2h1v1h-1zM30 2h1v1h-1zM42 2h1v1h-1zM75 2h1v1h-1zM92 2h1v1h-1z"/><path fill="#ececec" d="M3 0h1v1h-1zM10 0h1v1h-1zM17 0h2v1h-2zM22 0h1v1h-1zM26 0h1v1h-1zM29 0h2v1h-2zM36 0h1v1h-1zM38 0h1v1h-1zM40 0h1v1h-1zM50 0h1v1h-1zM69 0h1v1h-1zM71 0h1v1h-1zM73 0h2v1h-2zM77 0h1v1h-1zM79 0h1v1h-1zM81 0h1v1h-1zM95 0h1v1h-1zM1 2h1v1h-1zM3 2h1v1h-1zM10 2h2v1h-2zM32 2h1v1h-1zM49 2h1v1h-1zM56 2h1v1h-1zM65 2h1v1h-1zM88 2h1v1h-1zM91 2h1v1h-1z"/><path fill="#f0f0f0" d="M0 0h1v1h-1zM2 0h1v1h-1zM6 0h1v1h-1zM9 0h1v1h-1zM16 0h1v1h-1zM19 0h2v1h-2zM37 0h1v1h-1zM41 0h1v1h-1zM43 0h1v1h-1zM45 0h1v1h-1zM51 0h1v1h-1zM55 0h1v1h-1zM61 0h1v1h-1zM63 0h1v1h-1zM67 0h1v1h-1zM80 0h1v1h-1zM86 0h1v1h-1zM89 0h1v1h-1zM12 2h1v1h-1zM54 2h1v1h-1zM86 2h1v1h-1zM1 3h2v1h-2zM4 3h1v1h-1zM6 3h1v1h-1zM11 3h1v1h-1zM13 3h1v1h-1zM16 3h2v1h-2zM29 3h1v1h-1zM34 3h1v1h-1zM39 3h1v1h-1zM41 3h1v1h-1zM44 3h1v1h-1zM50 3h1v1h-1zM71 3h2v1h-2zM74 3h1v1h-1zM76 3h1v1h-1zM78 3h1v1h-1zM83 3h1v1h-1zM87 3h1v1h-1zM91 3h1v1h-1zM93 3h1v1h-1z"/><path fill="#f4f4f4" d="M13 0h1v1h-1zM15 0h1v1h-1zM23 0h3v1h-3zM27 0h1v1h-1zM32 0h1v1h-1zM34 0h1v1h-1zM42 0h1v1h-1zM54 0h1v1h-1zM58 0h2v1h-2zM62 0h1v1h-1zM65 0h1v1h-1zM85 0h1v1h-1zM90 0h1v1h-1zM94 0h1v1h-1zM7 3h3v1h-3zM15 3h1v1h-1zM18 3h4v1h-4zM25 3h1v1h-1zM31 3h1v1h-1zM40 3h1v1h-1zM42 3h2v1h-2zM46 3h1v1h-1zM51 3h4v1h-4zM56 3h1v1h-1zM58 3h2v1h-2zM61 3h2v1h-2zM64 3h1v1h-1zM66 3h1v1h-1zM70 3h1v1h-1zM79 3h1v1h-1zM82 3h1v1h-1zM84 3h1v1h-1zM86 3h1v1h-1zM90 3h1v1h-1zM94 3h1v1h-1z"/><path fill="#f8f8f8" d="M1 0h1v1h-1zM4 0h2v1h-2zM7 0h2v1h-2zM11 0h1v1h-1zM14 0h1v1h-1zM21 0h1v1h-1zM31 0h1v1h-1zM33 0h1v1h-1zM35 0h1v1h-1zM39 0h1v1h-1zM44 0h1v1h-1zM48 0h2v1h-2zM52 0h1v1h-1zM60 0h1v1h-1zM66 0h1v1h-1zM68 0h1v1h-1zM72 0h1v1h-1zM76 0h1v1h-1zM78 0h1v1h-1zM82 0h3v1h-3zM87 0h2v1h-2zM91 0h2v1h-2zM0 3h1v1h-1zM3 3h1v1h-1zM5 3h1v1h-1zM10 3h1v1h-1zM14 3h1v1h-1zM22 3h3v1h-3zM26 3h2v1h-2zM30 3h1v1h-1zM33 3h1v1h-1zM35 3h3v1h-3zM47 3h3v1h-3zM55 3h1v1h-1zM57 3h1v1h-1zM60 3h1v1h-1zM63 3h1v1h-1zM65 3h1v1h-1zM67 3h3v1h-3zM75 3h1v1h-1zM77 3h1v1h-1zM81 3h1v1h-1zM85 3h1v1h-1zM88 3h2v1h-2zM95 3h1v1h-1z"/><path fill="#fcfcfc" d="M12 0h1v1h-1zM28 0h1v1h-1zM46 0h2v1h-2zM53 0h1v1h-1zM56 0h2v1h-2zM64 0h1v1h-1zM70 0h1v1h-1zM75 0h1v1h-1zM93 0h1v1h-1zM12 3h1v1h-1zM28 3h1v1h-1zM32 3h1v1h-1zM38 3h1v1h-1zM45 3h1v1h-1zM73 3h1v1h-1zM80 3h1v1h-1zM92 3h1v1h-1z"/></svg>
<svg style="left:1132px;top:407px" width="252" height="18" viewBox="0 0 42 3" preserveAspectRatio="none" shape-rendering="crispEdges"><path fill="#b0b0b0" d="M31 1h1v1h-1zM33 1h2v1h-2zM38 1h1v1h-1zM40 1h1v1h-1z"/><path fill="#b4b4b4" d="M5 1h1v1h-1zM41 1h1v1h-1z"/><path fill="#b8b8b8" d="M2 1h1v1h-1z"/><path fill="#bcbcbc" d="M3 1h1v1h-1zM20 1h1v1h-1zM24 1h3v1h-3zM29 1h1v1h-1z"/><path fill="#c0c0c0" d="M0 1h1v1h-1zM7 1h1v1h-1zM12 1h2v1h-2zM22 1h1v1h-1zM35 1h2v1h-2z"/><path fill="#c4c4c4" d="M11 1h1v1h-1z"/><path fill="#c8c8c8" d="M37 1h1v1h-1z"/><path fill="#cccccc" d="M4 1h1v1h-1z"/><path fill="#d0d0d0" d="M6 1h1v1h-1zM9 1h1v1h-1zM27 1h1v1h-1z"/><path fill="#d4d4d4" d="M10 1h1v1h-1zM14 1h1v1h-1zM17 1h1v1h-1zM19 1h1v1h-1zM39 1h1v1h-1z"/><path fill="#d8d8d8" d="M15 1h1v1h-1zM21 1h1v1h-1zM28 1h1v1h-1zM30 1h1v1h-1zM32 1h1v1h-1z"/><path fill="#dcdcdc" d="M1 1h1v1h-1zM16 1h1v1h-1zM18 1h1v1h-1z"/><path fill="#e0e0e0" d="M4 0h1v1h-1zM6 0h1v1h-1zM13 0h2v1h-2zM18 0h1v1h-1zM20 0h1v1h-1zM24 0h1v1h-1zM8 1h1v1h-1zM23 1h1v1h-1zM3 2h1v1h-1zM5 2h1v1h-1zM21 2h2v1h-2z"/><path fill="#e4e4e4" d="M3 0h1v1h-1zM9 0h2v1h-2zM19 0h1v1h-1zM23 0h1v1h-1zM27 0h1v1h-1zM41 0h1v1h-1zM0 2h1v1h-1zM7 2h1v1h-1zM9 2h1v1h-1zM15 2h1v1h-1zM20 2h1v1h-1zM27 2h1v1h-1zM33 2h1v1h-1zM35 2h1v1h-1z"/><path fill="#e8e8e8" d="M1 0h1v1h-1zM21 0h1v1h-1zM25 0h1v1h-1zM32 0h1v1h-1zM37 0h1v1h-1zM2 2h1v1h-1zM11 2h1v1h-1zM14 2h1v1h-1zM16 2h2v1h-2zM31 2h1v1h-1zM34 2h1v1h-1zM38 2h2v1h-2z"/><path fill="#ececec" d="M0 0h1v1h-1zM8 0h1v1h-1zM16 0h2v1h-2zM26 0h1v1h-1zM29 0h2v1h-2zM36 0h1v1h-1zM12 2h2v1h-2zM18 2h1v1h-1zM23 2h1v1h-1zM28 2h2v1h-2zM32 2h1v1h-1z"/><path fill="#f0f0f0" d="M5 0h1v1h-1zM11 0h1v1h-1zM15 0h1v1h-1zM22 0h1v1h-1zM31 0h1v1h-1zM34 0h1v1h-1zM40 0h1v1h-1zM1 2h1v1h-1zM8 2h1v1h-1zM24 2h1v1h-1zM37 2h1v1h-1zM40 2h1v1h-1z"/><path fill="#f4f4f4" d="M7 0h1v1h-1zM12 0h1v1h-1zM28 0h1v1h-1zM33 0h1v1h-1zM35 0h1v1h-1zM39 0h1v1h-1zM6 2h1v1h-1zM10 2h1v1h-1zM19 2h1v1h-1zM30 2h1v1h-1zM36 2h1v1h-1z"/><path fill="#f8f8f8" d="M2 0h1v1h-1zM38 0h1v1h-1zM4 2h1v1h-1zM25 2h2v1h-2zM41 2h1v1h-1z"/></svg>
<svg style="left:1230px;top:438px" width="132" height="18" viewBox="0 0 22 3" preserveAspectRatio="none" shape-rendering="crispEdges"><path fill="#b4b4b4" d="M4 1h1v1h-1zM20 1h1v1h-1z"/><path fill="#b8b8b8" d="M13 1h1v1h-1z"/><path fill="#bcbcbc" d="M1 1h1v1h-1zM14 1h1v1h-1z"/><path fill="#c0c0c0" d="M0 1h1v1h-1zM6 1h1v1h-1zM12 1h1v1h-1z"/><path fill="#c4c4c4" d="M11 1h1v1h-1zM15 1h1v1h-1zM18 1h2v1h-2zM21 1h1v1h-1z"/><path fill="#cccccc" d="M7 1h1v1h-1z"/><path fill="#d4d4d4" d="M3 1h1v1h-1z"/><path fill="#d8d8d8" d="M2 1h1v1h-1zM16 1h1v1h-1z"/><path fill="#dcdcdc" d="M5 1h1v1h-1zM8 1h1v1h-1zM10 1h1v1h-1zM17 1h1v1h-1z"/><path fill="#e0e0e0" d="M6 0h1v1h-1zM9 0h1v1h-1zM11 0h1v1h-1zM20 0h2v1h-2zM9 1h1v1h-1zM16 2h1v1h-1zM19 2h1v1h-1z"/><path fill="#e4e4e4" d="M1 0h1v1h-1zM11 2h1v1h-1zM15 2h1v1h-1z"/><path fill="#e8e8e8" d="M4 0h1v1h-1zM8 0h1v1h-1zM18 0h1v1h-1zM5 2h1v1h-1zM8 2h1v1h-1zM10 2h1v1h-1zM17 2h2v1h-2zM20 2h1v1h-1z"/><path fill="#ececec" d="M2 0h1v1h-1zM7 0h1v1h-1zM12 0h1v1h-1zM15 0h1v1h-1zM17 0h1v1h-1zM1 2h1v1h-1zM6 2h1v1h-1zM9 2h1v1h-1zM12 2h1v1h-1z"/><path fill="#f0f0f0" d="M5 0h1v1h-1zM10 0h1v1h-1zM13 0h2v1h-2zM2 2h2v1h-2zM7 2h1v1h-1zM14 2h1v1h-1z"/><path fill="#f4f4f4" d="M0 0h1v1h-1zM3 0h1v1h-1zM16 0h1v1h-1zM0 2h1v1h-1zM4 2h1v1h-1zM13 2h1v1h-1zM21 2h1v1h-1z"/><path fill="#f8f8f8" d="M19 0h1v1h-1z"/></svg>
<svg style="left:1103px;top:97px" width="174" height="18" viewBox="0 0 29 3" preserveAspectRatio="none" shape-rendering="crispEdges"><path fill="#a4bbe2" d="M0 1h1v1h-1zM16 1h1v1h-1z"/><path fill="#aabfe4" d="M3 1h1v1h-1zM8 1h1v1h-1zM10 1h1v1h-1zM15 1h1v1h-1z"/><path fill="#aec2e5" d="M13 1h1v1h-1zM20 1h1v1h-1z"/><path fill="#b1c4e6" d="M19 1h1v1h-1z"/><path fill="#bbcce9" d="M24 1h1v1h-1zM26 1h1v1h-1z"/><path fill="#beceea" d="M11 1h1v1h-1z"/><path fill="#c1d1eb" d="M6 1h1v1h-1z"/><path fill="#c5d3ec" d="M9 1h1v1h-1zM14 1h1v1h-1z"/><path fill="#cedaef" d="M2 1h1v1h-1zM23 1h1v1h-1z"/><path fill="#d2ddf0" d="M18 2h1v1h-1zM25 2h1v1h-1z"/><path fill="#d5dff1" d="M27 1h1v1h-1zM15 2h1v1h-1z"/><path fill="#d8e2f2" d="M28 1h1v1h-1zM9 2h1v1h-1z"/><path fill="#dbe4f3" d="M5 1h1v1h-1zM7 1h1v1h-1z"/><path fill="#dfe7f4" d="M4 1h1v1h-1z"/><path fill="#e2e9f5" d="M0 2h1v1h-1zM4 2h2v1h-2zM7 2h1v1h-1zM23 2h1v1h-1z"/><path fill="#e5ecf6" d="M1 1h1v1h-1zM17 1h2v1h-2zM22 1h1v1h-1zM3 2h1v1h-1zM19 2h1v1h-1zM27 2h1v1h-1z"/><path fill="#e8eef8" d="M21 0h1v1h-1zM24 0h1v1h-1zM2 2h1v1h-1zM10 2h2v1h-2z"/><path fill="#ecf0f9" d="M11 0h1v1h-1zM14 0h3v1h-3zM26 0h1v1h-1zM25 1h1v1h-1zM12 2h1v1h-1z"/><path fill="#eff3fa" d="M4 0h1v1h-1zM19 0h1v1h-1zM22 0h1v1h-1zM28 0h1v1h-1zM12 1h1v1h-1zM21 1h1v1h-1zM17 2h1v1h-1z"/><path fill="#f2f5fb" d="M0 0h1v1h-1zM2 0h1v1h-1zM7 0h1v1h-1zM9 0h1v1h-1zM8 2h1v1h-1zM22 2h1v1h-1z"/><path fill="#f6f8fc" d="M10 0h1v1h-1zM18 0h1v1h-1zM23 0h1v1h-1zM25 0h1v1h-1zM14 2h1v1h-1zM16 2h1v1h-1z"/><path fill="#f9fafd" d="M1 0h1v1h-1zM6 0h1v1h-1zM12 0h2v1h-2zM27 0h1v1h-1zM1 2h1v1h-1zM6 2h1v1h-1zM13 2h1v1h-1zM20 2h1v1h-1zM26 2h1v1h-1z"/><path fill="#fcfdfe" d="M3 0h1v1h-1zM5 0h1v1h-1zM8 0h1v1h-1zM17 0h1v1h-1zM20 0h1v1h-1zM21 2h1v1h-1zM24 2h1v1h-1zM28 2h1v1h-1z"/></svg>
<div class="a" style="left:1285px;top:103px;width:6px;height:6px;background:#9c9c9c"></div><div class="a" style="left:1291px;top:103px;width:6px;height:6px;background:#ececec"></div><div class="a" style="left:1277px;top:109px;width:6px;height:6px;background:#d9d9d9"></div><div class="a" style="left:1283px;top:109px;width:6px;height:6px;background:#f2f2f2"></div>
<div class="a" style="left:922px;top:506px;width:972px;height:1px;background:#dedede"></div>
<div class="t" style="left:938px;top:523.01px;font-size:17px;color:#333;letter-spacing:-0.54px;">Spam Scanning</div>
<svg style="left:0;top:0" width="1" height="1"><path d="M1866.5 542.5 L1873 536 L1879.5 542.5" fill="none" stroke="#666" stroke-width="2"/></svg>
<div class="t b" style="left:938px;top:572.90px;font-size:15px;color:#1a1a1a;letter-spacing:-0.47px;">Spam Score</div>
<svg style="left:0;top:0" width="1" height="1"><circle cx="1034" cy="581" r="7.6" fill="none" stroke="#111" stroke-width="1.6"/><circle cx="1033.9" cy="577.7" r="1.1" fill="#111"/><path d="M1032 580.4 H1034.3 V584.9 M1031.8 584.9 H1036.2" fill="none" stroke="#111" stroke-width="1.6"/></svg>
<div class="t" style="left:1142px;top:573.30px;font-size:15px;color:#333;">-</div>
<div class="t b" style="left:938px;top:609.30px;font-size:15px;color:#1a1a1a;letter-spacing:-0.18px;">Category</div>
<svg style="left:0;top:0" width="1" height="1"><circle cx="1014.5" cy="617" r="7.6" fill="none" stroke="#111" stroke-width="1.6"/><circle cx="1014.4" cy="613.7" r="1.1" fill="#111"/><path d="M1012.5 616.4 H1014.8 V620.9 M1012.3 620.9 H1016.7" fill="none" stroke="#111" stroke-width="1.6"/></svg>
<div class="t" style="left:1142px;top:609.70px;font-size:15px;color:#333;letter-spacing:-0.21px;">None</div>
<div class="t b" style="left:938px;top:644.90px;font-size:15px;color:#1a1a1a;letter-spacing:-0.65px;">Spam Detection Level</div>
<svg style="left:0;top:0" width="1" height="1"><circle cx="1100.5" cy="653" r="7.6" fill="none" stroke="#111" stroke-width="1.6"/><circle cx="1100.4" cy="649.7" r="1.1" fill="#111"/><path d="M1098.5 652.4 H1100.8 V656.9 M1098.3 656.9 H1102.7" fill="none" stroke="#111" stroke-width="1.6"/></svg>
<div class="a" style="left:922px;top:679px;width:972px;height:1px;background:#dedede"></div>
<div class="t" style="left:938px;top:694.91px;font-size:17px;color:#333;letter-spacing:-0.13px;">Attachments (2)</div>
<svg style="left:0;top:0" width="1" height="1"><path d="M1866.5 715.5 L1873 709 L1879.5 715.5" fill="none" stroke="#666" stroke-width="2"/></svg>
<div class="a" style="left:938px;top:759px;width:940px;height:193px;border-radius:16px;background:#fff;box-shadow:0 1px 2px rgba(0,0,0,0.35),0 0 1px rgba(0,0,0,0.12)"></div>
<div class="t" style="left:970px;top:797.35px;font-size:14px;color:#333;letter-spacing:0.5px;">Name</div>
<div class="t" style="left:1348px;top:797.35px;font-size:14px;color:#333;letter-spacing:0.3px;">Size</div>
<div class="a" style="left:954px;top:831px;width:908px;height:1px;background:#dcdcdc"></div>
<div class="t" style="left:970px;top:850.55px;font-size:14px;color:#222;letter-spacing:0.4px;">status.txt</div>
<div class="t" style="left:1348px;top:850.55px;font-size:14px;color:#222;letter-spacing:0.08px;">408 Bytes</div>
<div class="a" style="left:954px;top:883px;width:908px;height:1px;background:#dcdcdc"></div>
<div class="t" style="left:970px;top:902.85px;font-size:14px;color:#222;letter-spacing:0.3px;">rfc822.eml</div>
<div class="t" style="left:1348px;top:902.85px;font-size:14px;color:#222;letter-spacing:0.2px;">1.68 KB</div>
<svg style="left:0;top:0" width="1" height="1"><g fill="#111"><circle cx="1705.5" cy="857" r="1.6"/><circle cx="1711" cy="857" r="1.6"/><circle cx="1716.5" cy="857" r="1.6"/></g></svg>
<svg style="left:0;top:0" width="1" height="1"><g fill="#111"><circle cx="1705.5" cy="910" r="1.6"/><circle cx="1711" cy="910" r="1.6"/><circle cx="1716.5" cy="910" r="1.6"/></g></svg>
<div class="a" style="left:922px;top:140px;width:130px;height:40px;border:2px solid #1f50af;border-radius:8px;background:#fff"></div>
<div class="a" style="left:934px;top:136px;width:46px;height:8px;background:#fff"></div>
<div class="t" style="left:938px;top:136.14px;font-size:12px;color:#3a6cc4;letter-spacing:0.16px;">Report</div>
<svg style="left:0;top:0" width="1" height="1"><path d="M1026 158.5 H1036 L1031 163.7 Z" fill="#2f60bb"/></svg>
<div class="a" style="left:1068px;top:140px;width:64px;height:40px;border:1px solid #2c5cb8;border-radius:8px"></div>
<svg style="left:0;top:0" width="1" height="1"><g fill="#2f60bb"><circle cx="1096" cy="161" r="1"/><circle cx="1100" cy="161" r="1"/><circle cx="1104" cy="161" r="1"/></g></svg>
<div class="a" style="left:922px;top:180px;width:130px;height:160px;background:#fff;border-radius:0 0 5px 5px;box-shadow:0 5px 5px -3px rgba(0,0,0,.2),0 8px 10px 1px rgba(0,0,0,.14),0 3px 14px 2px rgba(0,0,0,.12)"></div>
<div class="a" style="left:922px;top:188px;width:130px;height:48px;background:#f5f5f5"></div>
<div class="t" style="left:938px;top:205.30px;font-size:15px;color:#222;letter-spacing:-0.19px;">Phishing</div>
<div class="t" style="left:938px;top:253.30px;font-size:15px;color:#222;letter-spacing:-0.1px;">Spam</div>
<div class="t" style="left:938px;top:301.30px;font-size:15px;color:#222;letter-spacing:-0.2px;">Malware</div>
<div class="a" style="left:905px;top:127px;width:158px;height:226px;border:6px solid #e60a0a"></div>

<div class="a" style="left:0;top:966px;width:1916px;height:1px;background:#bdbdbd"></div>
</div></body></html>
